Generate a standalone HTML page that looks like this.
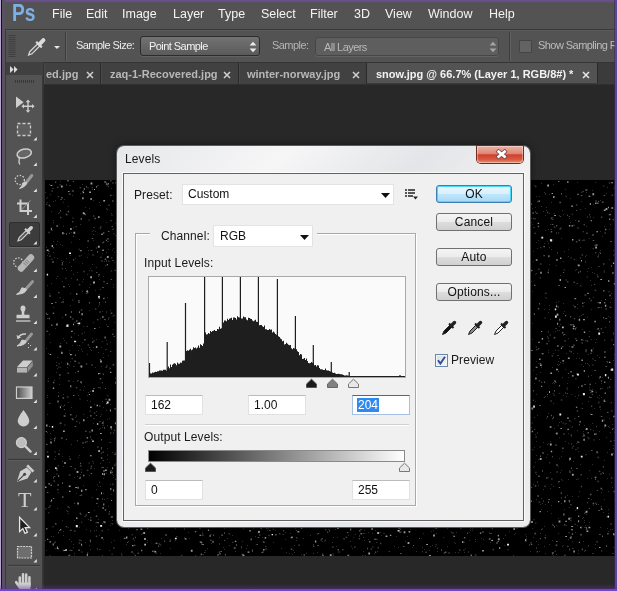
<!DOCTYPE html>
<html>
<head>
<meta charset="utf-8">
<title>Levels</title>
<style>
html,body{margin:0;padding:0;}
body{width:617px;height:591px;overflow:hidden;position:relative;background:#535353;font-family:"Liberation Sans",sans-serif;}
.abs{position:absolute;}
#app{will-change:transform;position:absolute;left:0;top:0;width:617px;height:591px;overflow:hidden;background:#535353;}
/* menu bar */
#menubar{left:0;top:0;width:617px;height:28px;background:#535353;}
#menubar span{position:absolute;top:7px;font-size:12.5px;line-height:14px;color:#f4f4f4;white-space:nowrap;}
#pslogo{position:absolute;left:12px;top:-1px;font-size:24px;font-weight:bold;color:#7fb0e2;transform:scaleX(0.8);transform-origin:0 0;}
/* options bar */
#optbar{left:2px;top:28px;width:615px;height:35px;background:#535353;border-top:1px solid #535353;border-bottom:1px solid #343434;box-sizing:border-box;overflow:hidden;box-shadow:inset 0 1px 0 #383838, inset 0 2px 0 #5c5c5c;}
.optlabel{position:absolute;font-size:11px;color:#ececec;white-space:nowrap;letter-spacing:-0.55px;}
.optsel{position:absolute;height:20px;box-sizing:border-box;border:1px solid #2c2c2c;border-radius:3px;background:linear-gradient(#727272,#5a5a5a);font-size:11px;color:#f2f2f2;line-height:18px;padding-left:8px;white-space:nowrap;letter-spacing:-0.55px;box-shadow:0 1px 0 #626262;}
/* tab bar */
#tabbar{left:44px;top:63px;width:573px;height:21px;background:#3b3b3b;border-bottom:1px solid #303030;box-sizing:content-box;}
.tab{position:absolute;top:0;height:21px;box-sizing:border-box;border-right:1px solid #2a2a2a;font-size:11px;font-weight:bold;color:#b8b8b8;line-height:23px;white-space:nowrap;background:#414141;box-shadow:inset 1px 0 0 #4a4a4a;}
.tab.active{background:#535353;color:#f2f2f2;height:20px;box-shadow:none;}
/* tool bar */
#toolbar{left:2px;top:62px;width:41px;height:529px;background:#535353;border-right:1px solid #383838;box-sizing:border-box;}
/* canvas */
#canvasbg{left:44px;top:85px;width:573px;height:506px;background:#282828;}
#photo{left:45px;top:180px;width:570px;height:376px;overflow:hidden;background:#000;}
/* dialog */
#dlg{left:117px;top:146px;width:413px;height:381px;border-radius:7px;background:linear-gradient(135deg,#e6e7e9 0%,#f6f6f7 22%,#e4e5e8 40%,#f1f1f2 55%,#e6e7e9 75%,#ededee 100%);box-shadow:0 0 0 1px #5a5a5a, 0 0 8px rgba(0,0,0,.6);}
#client{left:7px;top:28px;width:399px;height:346px;background:#f0f0f0;box-shadow:0 0 0 1px #626262, 0 0 0 2px rgba(255,255,255,.75);}
.lbl{position:absolute;font-size:12px;color:#1a1a1a;white-space:nowrap;line-height:14px;letter-spacing:0.1px;}
.btn{position:absolute;width:76px;height:18px;box-sizing:border-box;border:1px solid #707070;border-radius:3px;background:linear-gradient(#f4f4f4 0%,#ececec 48%,#dddddd 52%,#d0d0d0 100%);font-size:12px;color:#111;text-align:center;line-height:16px;letter-spacing:0.15px;}
.inp{position:absolute;width:58px;height:20px;box-sizing:border-box;border:1px solid #e2e2e2;border-top-color:#bcbcbc;background:#fff;font-size:12px;color:#111;line-height:19px;padding-left:5px;}
.btn.def{border-color:#3c7fb1;box-shadow:inset 0 0 0 1px #48d8fb;background:linear-gradient(#eaf6fd 0%,#d9f0fc 48%,#bee6fd 52%,#a7d9f5 100%);}
.sel{position:absolute;box-sizing:border-box;border:1px solid #e3e3e3;background:#fff;font-size:12px;color:#111;}
</style>
</head>
<body>
<div id="app">

<!-- MENU BAR -->
<div id="menubar" class="abs">
  <div id="pslogo">Ps</div>
  <span style="left:52px">File</span>
  <span style="left:86px">Edit</span>
  <span style="left:122px">Image</span>
  <span style="left:173px">Layer</span>
  <span style="left:218px">Type</span>
  <span style="left:261px">Select</span>
  <span style="left:310px">Filter</span>
  <span style="left:354px">3D</span>
  <span style="left:385px">View</span>
  <span style="left:428px">Window</span>
  <span style="left:489px">Help</span>
</div>

<!-- OPTIONS BAR -->
<div id="optbar" class="abs">
  <svg class="abs" style="left:0;top:0" width="70" height="34" viewBox="0 0 70 34">
    <path d="M6.5 6.5H13.5M6.5 8.6H13.5M6.5 10.7H13.5M6.5 12.8H13.5M6.5 14.9H13.5M6.5 17H13.5M6.5 19.1H13.5M6.5 21.2H13.5M6.5 23.3H13.5M6.5 25.4H13.5M6.5 27.5H13.5" stroke="#3e3e3e" stroke-width="1"/>
    <path d="M26.6 26 L27.8 22.6 L35.6 14.8 L37.8 17 L30 24.8 Z" fill="#5a5a5a" stroke="#dcdcdc" stroke-width="1.2"/>
    <path d="M34.2 12.8 L39.8 18.4" stroke="#dcdcdc" stroke-width="2.2"/>
    <path d="M37.8 14.8 L41.4 11.2" stroke="#dcdcdc" stroke-width="4" stroke-linecap="round"/>
    <path d="M52 17 h6 l-3 3z" fill="#e8e8e8"/>
    <path d="M63.5 3V32" stroke="#3e3e3e" stroke-width="1"/><path d="M64.5 3V32" stroke="#606060" stroke-width="1"/>
  </svg>
  <div class="optlabel" style="left:74px;top:10px">Sample Size:</div>
  <div class="optsel" style="left:138px;top:7px;width:120px">Point Sample</div>
  <svg class="abs" style="left:247px;top:12px" width="8" height="12" viewBox="0 0 8 12"><path d="M0.6 4.4 L4 0.8 L7.4 4.4Z M0.6 7.6 L4 11.2 L7.4 7.6Z" fill="#ececec"/></svg>
  <div class="optlabel" style="left:270px;top:10px;color:#b4b4b4">Sample:</div>
  <div class="optsel" style="left:313px;top:8px;width:184px;height:19px;color:#b8b8b8;background:#5e5e5e;border-color:#464646">All Layers</div>
  <svg class="abs" style="left:487px;top:12px" width="8" height="12" viewBox="0 0 8 12"><path d="M0.6 4.4 L4 0.8 L7.4 4.4Z M0.6 7.6 L4 11.2 L7.4 7.6Z" fill="#a4a4a4"/></svg>
  <div class="abs" style="left:507px;top:3px;width:1px;height:29px;background:#3e3e3e;box-shadow:1px 0 0 #606060"></div>
  <div class="abs" style="left:517px;top:11px;width:13px;height:13px;box-sizing:border-box;border:1px solid #444;background:#636363;border-radius:1px"></div>
  <div class="optlabel" style="left:536px;top:10px;color:#bcbcbc">Show Sampling Ring</div>
</div>

<!-- TOOLBAR -->
<div id="toolbar" class="abs"></div>
<!--TOOLS--><svg class="abs" style="left:0;top:0" width="50" height="591" viewBox="0 0 50 591">
<rect x="2" y="62" width="3" height="529" fill="#595062"/><rect x="5" y="62" width="1" height="529" fill="#3c3c3c"/>
<rect x="43" y="62" width="2" height="529" fill="#333"/>
<rect x="6" y="62" width="37" height="13" fill="#404040"/>
<path d="M10 66 l3.6 3.5 l-3.6 3.5z M14 66 l3.6 3.5 l-3.6 3.5z" fill="#dcdcdc"/>
<path d="M15 81.5 H35" stroke="#383838" stroke-width="3" stroke-dasharray="1 1"/>
<path d="M16 96.5 V108 L23.6 102.2 Z" fill="#cecece"/>
<path d="M28 101 V111.5 M22.8 106.2 H33.2" stroke="#cecece" stroke-width="1.4"/>
<path d="M28 99.6 l-2.3 2.6 h4.6z M28 112.8 l-2.3 -2.6 h4.6z M21.4 106.2 l2.6 -2.3 v4.6z M34.6 106.2 l-2.6 -2.3 v4.6z" fill="#cecece"/>
<rect x="17.5" y="123.5" width="13" height="12" fill="#5f5f5f" stroke="#cecece" stroke-width="1.3" stroke-dasharray="3 2"/>
<path d="M36.8 137.1 V140.5 H33.4 Z" fill="#e4e4e4"/>
<ellipse cx="24.2" cy="153.5" rx="7.3" ry="4.3" transform="rotate(-14 24.2 153.5)" fill="#666" stroke="#cecece" stroke-width="1.5"/>
<path d="M18.2 157 q1.8 1.5 1 3 q-0.8 2 0.6 4.5" stroke="#cecece" stroke-width="1.4" fill="none"/>
<path d="M36.8 162.6 V166 H33.4 Z" fill="#e4e4e4"/>
<circle cx="19.8" cy="180" r="4.6" fill="none" stroke="#cecece" stroke-width="1.3" stroke-dasharray="1.5 1.5"/>
<path d="M31.8 175.5 L25.5 183.5" stroke="#989898" stroke-width="3" stroke-linecap="round"/>
<path d="M26.5 182.2 q0 4.5 -7 6.3 q2.8 -2 3.6 -5.6 z" fill="#cecece" stroke="#cecece" stroke-width="1"/>
<path d="M36.8 188.6 V192 H33.4 Z" fill="#e4e4e4"/>
<path d="M20.5 199.5 V211 H32 M17 203.5 H28 V215" stroke="#cecece" stroke-width="2" fill="none"/>
<path d="M30.5 200.5 L21.5 210" stroke="#989898" stroke-width="1"/>
<path d="M36.8 214.6 V218 H33.4 Z" fill="#e4e4e4"/>
<rect x="9.5" y="222.5" width="30" height="24" rx="1.5" fill="#3c3c3c" stroke="#2e2e2e" stroke-width="1"/>
<path d="M9.5 247.6 H39.5" stroke="#6a6a6a" stroke-width="1"/>
<path d="M18 240.8 L19.2 237.6 L26.2 230.6 L28.3 232.7 L21.3 239.7 Z" fill="#555" stroke="#cecece" stroke-width="1.2"/>
<path d="M25 228.8 L30 233.8" stroke="#cecece" stroke-width="2"/>
<path d="M28.2 230.8 L31.2 227.8" stroke="#cecece" stroke-width="3.6" stroke-linecap="round"/>
<path d="M36.8 241.1 V244.5 H33.4 Z" fill="#e4e4e4"/>
<circle cx="18.3" cy="262.5" r="4.6" fill="none" stroke="#cecece" stroke-width="1.3" stroke-dasharray="1.5 1.5"/>
<path d="M31 257.5 L21 268.5" stroke="#b6b6b6" stroke-width="6.4" stroke-linecap="round"/>
<path d="M28 260.8 L24 265.2" stroke="#8a8a8a" stroke-width="4.4" stroke-dasharray="1 1"/>
<path d="M36.8 268.6 V272 H33.4 Z" fill="#e4e4e4"/>
<path d="M32.6 281.5 L25 290" stroke="#989898" stroke-width="2.8" stroke-linecap="round"/>
<path d="M26.3 289 q0.2 4.6 -9.8 5.4 q4 -1.6 5.4 -6.6 z" fill="#cecece" stroke="#cecece" stroke-width="1"/>
<path d="M36.8 294.6 V298 H33.4 Z" fill="#e4e4e4"/>
<path d="M20.5 308.5 q0 -3 2.5 -3 q2.5 0 2.5 3 q0 1.8 -1.2 3.2 v3 h5.2 v3.6 h-13 v-3.6 h5.2 v-3 q-1.2 -1.4 -1.2 -3.2z" fill="#cecece"/>
<path d="M16 321 H30.5" stroke="#cecece" stroke-width="1.3"/>
<path d="M36.8 320.6 V324 H33.4 Z" fill="#e4e4e4"/>
<path d="M31.6 334 L25 342" stroke="#989898" stroke-width="2.8" stroke-linecap="round"/>
<path d="M26 341 q0.2 4.2 -9 5 q3.6 -1.6 5 -6 z" fill="#cecece" stroke="#cecece" stroke-width="1"/>
<path d="M18 338 q2 -4.5 8 -4" stroke="#cecece" stroke-width="1.5" fill="none"/><path d="M16.5 335 l1 4.2 l3.6 -2z" fill="#cecece"/>
<path d="M28.5 343 v1 M30.5 345 v1 M28.5 347 v1" stroke="#cecece" stroke-width="1"/>
<path d="M36.8 347.1 V350.5 H33.4 Z" fill="#e4e4e4"/>
<path d="M23 360.5 H32.5 L27 367 H17 Z" fill="#cecece"/>
<path d="M17 367.6 H27 V372.6 H17 Z" fill="#b4b4b4"/>
<path d="M27.6 367.4 L32.8 361.2 V366 L27.6 372.4 Z" fill="#8e8e8e"/>
<path d="M36.8 373.1 V376.5 H33.4 Z" fill="#e4e4e4"/>
<defs><linearGradient id="tg" x1="0" x2="1" y1="0" y2="0"><stop offset="0" stop-color="#4a4a4a"/><stop offset="1" stop-color="#cfcfcf"/></linearGradient></defs>
<rect x="16.5" y="387" width="15.5" height="11.4" fill="url(#tg)" stroke="#cecece" stroke-width="1.2"/>
<path d="M36.8 399.6 V403 H33.4 Z" fill="#e4e4e4"/>
<path d="M23.5 410 q-5.8 7.6 -5.8 11 a5.8 5.4 0 0 0 11.6 0 q0 -3.4 -5.8 -11z" fill="#cecece"/>
<path d="M36.8 425.6 V429 H33.4 Z" fill="#e4e4e4"/>
<circle cx="21.4" cy="442.6" r="5" fill="#bdbdbd" stroke="#cecece" stroke-width="1.2"/>
<path d="M25.2 446.2 L30.6 451.6" stroke="#cecece" stroke-width="2.4" stroke-linecap="round"/>
<path d="M36.8 451.6 V455 H33.4 Z" fill="#e4e4e4"/>
<path d="M8 459.5 H40" stroke="#3a3a3a" stroke-width="1.2"/><path d="M8 460.6 H40" stroke="#5e5e5e" stroke-width="1"/>
<path d="M16.8 482 L20.2 471.2 L26.8 467.4 L31.4 472 L27.6 478.6 Z" fill="#cecece"/>
<path d="M17.4 481.4 L24.2 474.6" stroke="#444" stroke-width="1.2"/><circle cx="24.6" cy="474.2" r="1.5" fill="#444"/>
<path d="M27.2 465.4 L33.4 471.6" stroke="#cecece" stroke-width="2.6"/>
<path d="M36.8 479.1 V482.5 H33.4 Z" fill="#e4e4e4"/>
<text x="18" y="507" font-family="Liberation Serif,serif" font-size="20" fill="#cecece" textLength="13.5" lengthAdjust="spacingAndGlyphs">T</text>
<path d="M36.8 507.1 V510.5 H33.4 Z" fill="#e4e4e4"/>
<path d="M19.6 517.4 V531.6 L22.8 528.6 L25 533.4 L27.4 532.2 L25.2 527.6 H29.6 Z" fill="#1e1e1e" stroke="#e6e6e6" stroke-width="1.3" stroke-linejoin="miter"/>
<path d="M36.8 533.1 V536.5 H33.4 Z" fill="#e4e4e4"/>
<rect x="17.5" y="546.5" width="14" height="11.5" fill="#6e6e6e" stroke="#cecece" stroke-width="1.2" stroke-dasharray="2 0.8"/>
<path d="M36.8 559.1 V562.5 H33.4 Z" fill="#e4e4e4"/>
<path d="M8 565.5 H40" stroke="#3a3a3a" stroke-width="1.2"/><path d="M8 566.6 H40" stroke="#5e5e5e" stroke-width="1"/>
<path d="M19.8 577.6V586M23 574.2V586M26.2 574.6V586M29.4 577.2V586" stroke="#cecece" stroke-width="2.5" stroke-linecap="round"/>
<path d="M18.55 582.5H30.65V586q0 3 -1.4 5H20.6L18.55 587Z" fill="#cecece"/>
<path d="M19.6 587.4L16.2 582.2" stroke="#cecece" stroke-width="2.6" stroke-linecap="round"/>
<path d="M36.8 587.4 V590.8 H33.4 Z" fill="#e4e4e4"/>
</svg><!--/TOOLS-->

<!-- TABS -->
<div id="tabbar" class="abs">
  <div class="tab" style="left:0;width:57px;padding-left:2px">ed.jpg</div>
  <div class="tab" style="left:57px;width:138px;padding-left:9px">zaq-1-Recovered.jpg</div>
  <div class="tab" style="left:195px;width:128px;padding-left:8px">winter-norway.jpg</div>
  <div class="tab active" style="left:323px;width:231px;padding-left:9px">snow.jpg @ 66.7% (Layer 1, RGB/8#) *</div>
  <svg class="abs" style="left:42px;top:8px" width="8" height="8" viewBox="0 0 8 8"><path d="M1 1L7 7M7 1L1 7" stroke="#d0d0d0" stroke-width="1.5"/></svg><svg class="abs" style="left:179px;top:8px" width="8" height="8" viewBox="0 0 8 8"><path d="M1 1L7 7M7 1L1 7" stroke="#d0d0d0" stroke-width="1.5"/></svg><svg class="abs" style="left:308px;top:8px" width="8" height="8" viewBox="0 0 8 8"><path d="M1 1L7 7M7 1L1 7" stroke="#d0d0d0" stroke-width="1.5"/></svg><svg class="abs" style="left:538px;top:8px" width="8" height="8" viewBox="0 0 8 8"><path d="M1 1L7 7M7 1L1 7" stroke="#e8e8e8" stroke-width="1.5"/></svg>
</div>

<!-- CANVAS -->
<div id="canvasbg" class="abs"></div>
<div id="photo" class="abs"><!--STARS--><svg width="570" height="376" viewBox="0 0 570 376" style="position:absolute;left:0;top:0"><path fill="#2e2e2e" d="M509 33h1v1h-1zM89 360h1v1h-1zM306 366h1v1h-1zM26 86h1v1h-1zM45 88h1v1h-1zM18 119h1v1h-1zM521 173h1v1h-1zM512 150h1v1h-1zM569 192h1v1h-1zM537 256h1v1h-1zM497 159h1v1h-1zM567 244h1v1h-1zM516 323h1v1h-1zM384 370h1v1h-1zM491 93h1v1h-1zM33 277h1v1h-1zM530 352h1v1h-1zM502 331h1v1h-1zM563 246h1v1h-1zM378 353h1v1h-1zM516 318h1v1h-1zM512 79h1v1h-1zM427 348h1v1h-1zM493 305h1v1h-1zM497 323h1v1h-1zM493 364h1v1h-1zM102 362h1v1h-1zM543 88h1v1h-1zM61 160h1v1h-1zM546 195h1v1h-1zM44 107h1v1h-1zM272 354h1v1h-1zM512 184h1v1h-1zM541 75h1v1h-1zM508 173h1v1h-1zM485 68h1v1h-1zM502 264h1v1h-1zM6 356h1v1h-1zM69 72h1v1h-1zM557 197h1v1h-1zM57 73h1v1h-1zM42 237h1v1h-1zM173 374h1v1h-1zM490 27h1v1h-1zM490 221h1v1h-1zM184 365h1v1h-1zM555 229h1v1h-1zM496 329h1v1h-1zM268 364h1v1h-1zM16 122h1v1h-1zM512 175h1v1h-1zM539 371h1v1h-1zM570 321h1v1h-1zM13 312h1v1h-1zM515 292h1v1h-1zM55 236h1v1h-1zM518 123h1v1h-1zM66 362h1v1h-1zM469 354h1v1h-1zM207 369h1v1h-1zM514 242h1v1h-1zM72 212h1v1h-1zM63 326h1v1h-1zM36 169h1v1h-1zM569 319h1v1h-1zM62 268h1v1h-1zM513 121h1v1h-1zM62 318h1v1h-1zM17 281h1v1h-1zM48 20h1v1h-1zM65 162h1v1h-1zM4 113h1v1h-1zM491 16h1v1h-1zM66 8h1v1h-1zM474 346h1v1h-1zM184 365h1v1h-1zM42 174h1v1h-1zM367 367h1v1h-1zM518 215h1v1h-1zM48 243h1v1h-1zM207 345h1v1h-1zM30 237h1v1h-1zM339 353h1v1h-1zM540 183h1v1h-1zM504 14h1v1h-1zM30 181h1v1h-1zM48 60h1v1h-1zM47 84h1v1h-1zM56 269h1v1h-1zM12 328h1v1h-1zM25 75h1v1h-1zM24 327h1v1h-1zM484 255h1v1h-1zM541 12h1v1h-1zM547 10h1v1h-1zM562 298h1v1h-1zM71 119h1v1h-1zM96 354h1v1h-1zM491 367h1v1h-1zM55 109h1v1h-1zM493 60h1v1h-1zM535 284h1v1h-1zM26 52h1v1h-1zM554 218h1v1h-1zM546 105h1v1h-1zM533 271h1v1h-1zM511 148h1v1h-1zM24 359h1v1h-1zM62 279h1v1h-1zM29 340h1v1h-1zM550 368h1v1h-1zM8 127h1v1h-1zM430 359h1v1h-1zM35 44h1v1h-1zM510 265h1v1h-1zM67 344h1v1h-1zM498 31h1v1h-1zM12 96h1v1h-1zM9 77h1v1h-1zM33 155h1v1h-1zM45 169h1v1h-1zM190 360h1v1h-1zM534 362h1v1h-1zM570 180h1v1h-1zM493 279h1v1h-1zM314 355h1v1h-1zM9 200h1v1h-1zM245 353h1v1h-1zM523 197h1v1h-1zM555 20h1v1h-1zM438 359h1v1h-1zM61 2h1v1h-1zM174 357h1v1h-1zM555 51h1v1h-1zM540 76h1v1h-1zM550 364h1v1h-1zM550 162h1v1h-1zM546 87h1v1h-1zM48 50h1v1h-1zM18 286h1v1h-1zM499 12h1v1h-1zM53 194h1v1h-1zM485 299h1v1h-1zM71 322h1v1h-1zM0 360h1v1h-1zM76 373h1v1h-1zM219 362h1v1h-1zM483 248h1v1h-1zM563 351h1v1h-1zM491 214h1v1h-1zM544 290h1v1h-1zM38 99h1v1h-1zM139 348h1v1h-1zM513 126h1v1h-1zM32 323h1v1h-1zM510 253h1v1h-1zM489 5h1v1h-1zM207 346h1v1h-1zM142 344h1v1h-1zM68 253h1v1h-1zM513 286h1v1h-1zM4 154h1v1h-1zM500 358h1v1h-1zM568 268h1v1h-1zM60 169h1v1h-1zM52 304h1v1h-1zM552 149h1v1h-1zM58 298h1v1h-1zM35 294h1v1h-1zM391 353h1v1h-1zM334 345h1v1h-1zM516 312h1v1h-1zM24 173h1v1h-1zM20 233h1v1h-1zM564 294h1v1h-1zM520 189h1v1h-1zM57 247h1v1h-1zM465 345h1v1h-1zM533 373h1v1h-1zM51 87h1v1h-1zM523 76h1v1h-1zM491 361h1v1h-1zM537 149h1v1h-1zM44 130h1v1h-1zM27 165h1v1h-1zM503 132h1v1h-1zM11 98h1v1h-1zM537 368h1v1h-1zM15 64h1v1h-1zM47 317h1v1h-1zM505 139h1v1h-1zM69 285h1v1h-1zM241 372h1v1h-1zM519 344h1v1h-1zM390 366h1v1h-1zM499 75h1v1h-1zM19 19h1v1h-1zM526 256h1v1h-1zM485 173h1v1h-1zM15 187h1v1h-1zM567 307h1v1h-1zM536 135h1v1h-1zM492 68h1v1h-1zM190 371h1v1h-1zM33 170h1v1h-1zM500 117h1v1h-1zM540 345h1v1h-1zM21 330h1v1h-1zM65 40h1v1h-1zM22 187h1v1h-1zM532 124h1v1h-1zM58 96h1v1h-1zM498 320h1v1h-1zM53 306h1v1h-1zM228 362h1v1h-1zM537 60h1v1h-1zM525 42h1v1h-1zM26 98h1v1h-1zM54 249h1v1h-1zM318 371h1v1h-1zM50 187h1v1h-1zM559 280h1v1h-1zM542 137h1v1h-1zM26 62h1v1h-1zM61 230h1v1h-1zM287 362h1v1h-1zM495 324h1v1h-1zM68 15h1v1h-1zM65 130h1v1h-1zM366 345h1v1h-1zM23 333h1v1h-1zM42 67h1v1h-1zM41 349h1v1h-1zM49 288h1v1h-1zM485 54h1v1h-1zM73 246h1v1h-1zM44 28h1v1h-1zM36 139h1v1h-1zM487 159h1v1h-1zM550 2h1v1h-1zM83 348h1v1h-1zM37 83h1v1h-1zM21 90h1v1h-1zM39 34h1v1h-1zM473 344h1v1h-1zM530 216h1v1h-1zM491 181h1v1h-1zM425 350h1v1h-1zM546 319h1v1h-1zM502 216h1v1h-1zM536 12h1v1h-1zM5 253h1v1h-1zM546 129h1v1h-1zM83 361h1v1h-1zM319 350h1v1h-1zM307 368h1v1h-1zM365 349h1v1h-1zM517 30h1v1h-1zM534 178h1v1h-1zM531 147h1v1h-1zM72 198h1v1h-1zM556 203h1v1h-1zM28 201h1v1h-1zM481 358h1v1h-1zM506 325h1v1h-1zM64 238h1v1h-1zM68 297h1v1h-1zM503 233h1v1h-1zM55 248h1v1h-1zM535 67h1v1h-1zM61 72h1v1h-1zM318 353h1v1h-1zM23 26h1v1h-1zM538 361h1v1h-1zM503 63h1v1h-1zM90 375h1v1h-1zM565 122h1v1h-1zM436 348h1v1h-1zM548 168h1v1h-1zM566 113h1v1h-1zM54 241h1v1h-1zM445 347h1v1h-1zM486 42h1v1h-1zM265 355h1v1h-1zM520 135h1v1h-1zM23 347h1v1h-1zM10 257h1v1h-1zM508 306h1v1h-1zM568 367h1v1h-1zM532 345h1v1h-1zM318 357h1v1h-1zM502 156h1v1h-1zM24 276h1v1h-1zM70 43h1v1h-1zM292 357h1v1h-1zM67 49h1v1h-1zM525 18h1v1h-1zM330 350h1v1h-1zM202 365h1v1h-1zM67 294h1v1h-1zM489 267h1v1h-1zM49 330h1v1h-1zM516 58h1v1h-1zM483 328h1v1h-1zM546 210h1v1h-1zM509 203h1v1h-1zM17 340h1v1h-1zM503 170h1v1h-1zM65 224h1v1h-1zM56 167h1v1h-1zM527 316h1v1h-1zM569 252h1v1h-1zM249 372h1v1h-1zM22 182h1v1h-1zM331 362h1v1h-1zM490 282h1v1h-1zM201 368h1v1h-1zM16 182h1v1h-1zM44 295h1v1h-1zM541 347h1v1h-1zM566 118h1v1h-1zM5 26h1v1h-1zM69 360h1v1h-1zM63 69h1v1h-1zM545 100h1v1h-1zM42 215h1v1h-1zM532 250h1v1h-1zM536 184h1v1h-1zM323 352h1v1h-1zM360 361h1v1h-1zM305 361h1v1h-1zM22 144h1v1h-1zM36 203h1v1h-1zM256 374h1v1h-1zM32 296h1v1h-1zM26 264h1v1h-1zM556 217h1v1h-1zM250 348h1v1h-1zM501 30h1v1h-1zM42 220h1v1h-1zM18 214h1v1h-1zM63 175h1v1h-1zM508 223h1v1h-1zM56 186h1v1h-1zM40 336h1v1h-1zM19 160h1v1h-1zM38 267h1v1h-1zM559 90h1v1h-1zM513 170h1v1h-1zM558 332h1v1h-1zM504 33h1v1h-1zM102 360h1v1h-1zM116 358h1v1h-1zM531 178h1v1h-1zM545 233h1v1h-1zM516 299h1v1h-1zM557 56h1v1h-1zM556 201h1v1h-1zM557 329h1v1h-1zM566 302h1v1h-1zM459 365h1v1h-1zM494 371h1v1h-1zM547 284h1v1h-1zM15 1h1v1h-1zM158 374h1v1h-1zM235 346h1v1h-1zM238 344h1v1h-1zM11 182h1v1h-1zM25 113h1v1h-1zM251 360h1v1h-1zM64 370h1v1h-1zM178 367h1v1h-1zM488 71h1v1h-1zM569 185h1v1h-1zM48 54h1v1h-1zM527 368h1v1h-1zM387 365h1v1h-1zM244 373h1v1h-1zM32 92h1v1h-1zM12 177h1v1h-1zM470 353h1v1h-1zM424 352h1v1h-1zM61 81h1v1h-1zM523 253h1v1h-1zM51 309h1v1h-1zM528 125h1v1h-1zM524 38h1v1h-1zM2 75h1v1h-1zM539 333h1v1h-1zM517 366h1v1h-1zM210 356h1v1h-1zM491 294h1v1h-1zM54 22h1v1h-1zM530 330h1v1h-1zM567 349h1v1h-1zM482 326h1v1h-1zM53 326h1v1h-1zM54 124h1v1h-1zM559 46h1v1h-1zM530 40h1v1h-1zM517 300h1v1h-1zM492 301h1v1h-1zM53 96h1v1h-1zM12 78h1v1h-1zM544 58h1v1h-1zM55 138h1v1h-1zM51 159h1v1h-1zM561 257h1v1h-1zM45 369h1v1h-1zM10 148h1v1h-1zM489 203h1v1h-1zM514 278h1v1h-1zM59 319h1v1h-1zM569 14h1v1h-1zM538 186h1v1h-1zM317 376h1v1h-1zM496 58h1v1h-1zM460 355h1v1h-1zM179 369h1v1h-1zM499 366h1v1h-1zM507 203h1v1h-1zM63 139h1v1h-1zM240 352h1v1h-1zM25 181h1v1h-1zM513 127h1v1h-1zM532 128h1v1h-1zM14 198h1v1h-1zM537 338h1v1h-1zM288 357h1v1h-1zM34 347h1v1h-1zM570 317h1v1h-1zM160 346h1v1h-1zM51 231h1v1h-1zM73 24h1v1h-1zM247 374h1v1h-1zM504 84h1v1h-1zM3 73h1v1h-1zM420 368h1v1h-1zM42 94h1v1h-1zM533 316h1v1h-1zM35 13h1v1h-1zM483 24h1v1h-1zM524 166h1v1h-1zM55 283h1v1h-1zM505 292h1v1h-1zM4 4h1v1h-1zM483 92h1v1h-1zM58 313h1v1h-1zM503 49h1v1h-1zM487 111h1v1h-1zM510 170h1v1h-1zM48 283h1v1h-1zM23 193h1v1h-1zM43 339h1v1h-1zM45 104h1v1h-1zM521 216h1v1h-1zM217 357h1v1h-1zM564 49h1v1h-1zM115 373h1v1h-1zM484 156h1v1h-1zM65 345h1v1h-1zM39 206h1v1h-1zM509 200h1v1h-1zM36 360h1v1h-1zM356 351h1v1h-1zM60 122h1v1h-1zM526 214h1v1h-1zM527 290h1v1h-1zM10 343h1v1h-1zM413 372h1v1h-1zM500 50h1v1h-1zM496 26h1v1h-1zM531 89h1v1h-1zM554 150h1v1h-1zM112 344h1v1h-1zM491 275h1v1h-1zM33 145h1v1h-1zM345 355h1v1h-1zM402 366h1v1h-1zM519 329h1v1h-1zM427 350h1v1h-1zM62 239h1v1h-1zM49 47h1v1h-1zM35 283h1v1h-1zM332 371h1v1h-1zM516 276h1v1h-1zM488 190h1v1h-1zM499 63h1v1h-1zM66 249h1v1h-1zM488 304h1v1h-1zM66 33h1v1h-1zM544 217h1v1h-1zM166 363h1v1h-1zM68 149h1v1h-1zM565 252h1v1h-1zM491 261h1v1h-1zM48 47h1v1h-1zM539 340h1v1h-1zM25 14h1v1h-1zM488 81h1v1h-1zM549 93h1v1h-1zM524 240h1v1h-1zM44 90h1v1h-1zM386 351h1v1h-1zM71 5h1v1h-1zM29 186h1v1h-1zM3 173h1v1h-1zM5 162h1v1h-1zM4 289h1v1h-1zM564 247h1v1h-1zM546 298h1v1h-1zM565 349h1v1h-1zM29 153h1v1h-1zM27 15h1v1h-1zM402 348h1v1h-1zM413 372h1v1h-1zM156 364h1v1h-1zM26 90h1v1h-1zM564 79h1v1h-1zM514 35h1v1h-1zM12 61h1v1h-1zM40 27h1v1h-1zM518 365h1v1h-1zM520 9h1v1h-1zM58 359h1v1h-1zM557 292h1v1h-1zM73 289h1v1h-1zM314 350h1v1h-1zM17 137h1v1h-1zM8 42h1v1h-1zM61 80h1v1h-1zM519 71h1v1h-1zM530 90h1v1h-1zM562 182h1v1h-1zM74 254h1v1h-1zM558 287h1v1h-1zM500 373h1v1h-1zM5 321h1v1h-1zM513 175h1v1h-1zM18 226h1v1h-1zM534 136h1v1h-1zM39 152h1v1h-1zM53 339h1v1h-1zM125 368h1v1h-1zM488 357h1v1h-1zM547 373h1v1h-1zM245 353h1v1h-1zM522 315h1v1h-1zM554 215h1v1h-1zM63 349h1v1h-1zM487 44h1v1h-1zM17 52h1v1h-1zM539 347h1v1h-1zM409 362h1v1h-1zM61 144h1v1h-1zM507 360h1v1h-1zM65 304h1v1h-1zM28 186h1v1h-1zM511 345h1v1h-1zM484 364h1v1h-1zM17 18h1v1h-1zM540 28h1v1h-1zM377 367h1v1h-1zM44 365h1v1h-1zM489 286h1v1h-1zM58 173h1v1h-1zM28 94h1v1h-1zM503 263h1v1h-1zM548 250h1v1h-1zM419 372h1v1h-1zM51 346h1v1h-1zM563 329h1v1h-1zM519 131h1v1h-1zM336 355h1v1h-1zM246 345h1v1h-1zM18 351h1v1h-1zM528 173h1v1h-1zM319 360h1v1h-1zM223 348h1v1h-1zM70 55h1v1h-1zM57 221h1v1h-1zM518 133h1v1h-1zM503 172h1v1h-1zM549 228h1v1h-1zM17 276h1v1h-1zM523 299h1v1h-1zM502 274h1v1h-1zM555 347h1v1h-1zM17 65h1v1h-1zM19 53h1v1h-1zM18 158h1v1h-1zM506 22h1v1h-1zM314 356h1v1h-1zM484 365h1v1h-1zM560 138h1v1h-1zM32 165h1v1h-1zM508 375h1v1h-1zM542 183h1v1h-1zM20 88h1v1h-1zM436 358h1v1h-1zM11 144h1v1h-1zM425 348h1v1h-1zM5 14h1v1h-1zM73 237h1v1h-1zM569 29h1v1h-1zM45 211h1v1h-1zM562 348h1v1h-1zM73 262h1v1h-1zM290 349h1v1h-1zM501 118h1v1h-1zM97 353h1v1h-1zM508 202h1v1h-1zM540 160h1v1h-1zM50 51h1v1h-1zM179 348h1v1h-1zM531 299h1v1h-1zM538 253h1v1h-1zM38 210h1v1h-1zM17 101h1v1h-1zM308 357h1v1h-1zM24 106h1v1h-1zM500 324h1v1h-1zM552 217h1v1h-1zM62 117h1v1h-1zM537 223h1v1h-1zM566 31h1v1h-1zM249 365h1v1h-1zM458 358h1v1h-1zM268 373h1v1h-1zM53 172h1v1h-1zM8 72h1v1h-1zM59 81h1v1h-1zM30 192h1v1h-1zM513 245h1v1h-1zM499 346h1v1h-1zM568 265h1v1h-1zM33 215h1v1h-1zM513 338h1v1h-1zM562 272h1v1h-1zM8 250h1v1h-1zM480 354h1v1h-1zM49 350h1v1h-1zM523 69h1v1h-1zM11 64h1v1h-1zM500 355h1v1h-1zM504 67h1v1h-1zM66 248h1v1h-1zM496 3h1v1h-1zM57 343h1v1h-1zM544 151h1v1h-1zM521 243h1v1h-1zM546 159h1v1h-1zM492 302h1v1h-1zM277 361h1v1h-1zM554 259h1v1h-1zM556 120h1v1h-1zM10 122h1v1h-1zM222 350h1v1h-1zM541 46h1v1h-1zM539 122h1v1h-1zM485 61h1v1h-1zM564 269h1v1h-1zM55 241h1v1h-1zM513 185h1v1h-1zM16 80h1v1h-1zM8 356h1v1h-1zM37 162h1v1h-1zM536 21h1v1h-1zM268 365h1v1h-1zM518 183h1v1h-1zM58 241h1v1h-1zM211 347h1v1h-1zM12 290h1v1h-1zM68 154h1v1h-1zM507 374h1v1h-1zM541 334h1v1h-1zM93 373h1v1h-1zM524 290h1v1h-1zM500 355h1v1h-1zM69 284h1v1h-1zM539 245h1v1h-1zM57 131h1v1h-1zM552 175h1v1h-1zM568 70h1v1h-1zM488 287h1v1h-1zM14 204h1v1h-1zM556 312h1v1h-1zM10 276h1v1h-1zM28 364h1v1h-1zM40 362h1v1h-1zM499 357h1v1h-1zM493 183h1v1h-1zM516 241h1v1h-1zM544 216h1v1h-1zM518 81h1v1h-1zM196 366h1v1h-1zM261 373h1v1h-1zM430 361h1v1h-1zM553 122h1v1h-1zM88 373h1v1h-1zM317 375h1v1h-1zM514 146h1v1h-1zM208 348h1v1h-1zM557 309h1v1h-1zM568 8h1v1h-1zM16 225h1v1h-1zM46 170h1v1h-1zM1 370h1v1h-1zM538 251h1v1h-1zM538 160h1v1h-1zM47 9h1v1h-1zM31 313h1v1h-1zM42 77h1v1h-1zM563 311h1v1h-1zM492 235h1v1h-1zM501 277h1v1h-1zM514 184h1v1h-1zM187 355h1v1h-1zM388 350h1v1h-1zM22 146h1v1h-1zM25 5h1v1h-1zM490 94h1v1h-1zM514 257h1v1h-1zM2 22h1v1h-1zM485 371h1v1h-1zM543 174h1v1h-1zM62 245h1v1h-1zM74 350h1v1h-1zM55 25h1v1h-1zM524 327h1v1h-1zM51 350h1v1h-1zM424 360h1v1h-1zM38 234h1v1h-1zM516 168h1v1h-1zM502 61h1v1h-1zM483 94h1v1h-1zM539 342h1v1h-1zM563 136h1v1h-1zM563 333h1v1h-1zM565 137h1v1h-1zM150 375h1v1h-1zM497 348h1v1h-1zM521 345h1v1h-1zM61 28h1v1h-1zM43 70h1v1h-1zM564 238h1v1h-1zM54 147h1v1h-1zM544 207h1v1h-1zM247 356h1v1h-1zM11 192h1v1h-1zM38 146h1v1h-1zM566 168h1v1h-1zM10 20h1v1h-1zM15 163h1v1h-1zM283 349h1v1h-1zM554 127h1v1h-1zM66 343h1v1h-1zM24 82h1v1h-1zM23 222h1v1h-1zM68 107h1v1h-1zM505 308h1v1h-1zM535 29h1v1h-1zM0 12h1v1h-1zM6 103h1v1h-1zM548 37h1v1h-1zM505 261h1v1h-1zM13 212h1v1h-1zM36 289h1v1h-1zM543 184h1v1h-1zM484 18h1v1h-1zM504 125h1v1h-1zM491 62h1v1h-1zM47 158h1v1h-1zM392 371h1v1h-1zM542 91h1v1h-1zM55 306h1v1h-1zM18 46h1v1h-1zM144 358h1v1h-1zM24 185h1v1h-1zM561 13h1v1h-1zM516 290h1v1h-1zM139 349h1v1h-1zM14 32h1v1h-1zM66 15h1v1h-1zM272 372h1v1h-1zM534 311h1v1h-1zM23 104h1v1h-1zM371 371h1v1h-1zM130 348h1v1h-1zM554 72h1v1h-1zM67 272h1v1h-1zM506 304h1v1h-1zM532 173h1v1h-1zM38 305h1v1h-1zM68 68h1v1h-1zM508 213h1v1h-1zM71 93h1v1h-1zM508 345h1v1h-1zM2 252h1v1h-1zM491 319h1v1h-1zM485 282h1v1h-1zM499 129h1v1h-1zM518 34h1v1h-1zM568 180h1v1h-1zM510 148h1v1h-1zM24 370h1v1h-1zM143 352h1v1h-1zM489 47h1v1h-1zM515 144h1v1h-1zM515 95h1v1h-1zM547 92h1v1h-1zM559 319h1v1h-1zM288 375h1v1h-1zM7 50h1v1h-1zM565 61h1v1h-1zM125 344h1v1h-1zM511 85h1v1h-1zM236 368h1v1h-1zM486 38h1v1h-1zM1 67h1v1h-1zM57 375h1v1h-1zM258 358h1v1h-1zM45 221h1v1h-1zM61 169h1v1h-1zM335 352h1v1h-1zM551 159h1v1h-1zM517 271h1v1h-1zM25 125h1v1h-1zM1 18h1v1h-1zM513 353h1v1h-1zM487 348h1v1h-1zM498 321h1v1h-1zM24 170h1v1h-1zM553 324h1v1h-1zM568 273h1v1h-1zM13 369h1v1h-1zM54 99h1v1h-1zM506 69h1v1h-1zM230 350h1v1h-1zM500 35h1v1h-1zM54 355h1v1h-1zM523 263h1v1h-1zM488 47h1v1h-1zM557 152h1v1h-1zM68 252h1v1h-1zM8 40h1v1h-1zM37 171h1v1h-1zM491 194h1v1h-1zM130 360h1v1h-1zM43 212h1v1h-1zM67 343h1v1h-1zM514 178h1v1h-1zM62 287h1v1h-1zM323 359h1v1h-1zM566 127h1v1h-1zM410 372h1v1h-1zM30 78h1v1h-1zM37 101h1v1h-1zM498 309h1v1h-1zM560 147h1v1h-1zM494 16h1v1h-1zM48 142h1v1h-1zM548 373h1v1h-1zM508 4h1v1h-1zM468 375h1v1h-1zM61 293h1v1h-1zM162 368h1v1h-1zM2 234h1v1h-1zM73 293h1v1h-1zM3 198h1v1h-1zM219 358h1v1h-1zM12 188h1v1h-1zM353 367h1v1h-1zM81 364h1v1h-1zM319 353h1v1h-1zM139 357h1v1h-1zM514 213h1v1h-1zM359 347h1v1h-1zM197 361h1v1h-1zM58 227h1v1h-1zM64 282h1v1h-1zM69 82h1v1h-1zM548 325h1v1h-1zM291 366h1v1h-1zM157 374h1v1h-1zM58 177h1v1h-1zM8 61h1v1h-1zM568 154h1v1h-1zM495 358h1v1h-1zM520 261h1v1h-1zM510 151h1v1h-1zM445 362h1v1h-1zM486 101h1v1h-1zM45 256h1v1h-1zM50 110h1v1h-1zM26 361h1v1h-1zM542 298h1v1h-1zM351 356h1v1h-1zM34 275h1v1h-1zM532 2h1v1h-1zM501 27h1v1h-1zM565 44h1v1h-1zM36 75h1v1h-1zM51 92h1v1h-1zM513 181h1v1h-1zM547 243h1v1h-1zM544 342h1v1h-1zM57 161h1v1h-1zM487 28h1v1h-1zM511 122h1v1h-1zM183 353h1v1h-1zM2 215h1v1h-1zM385 366h1v1h-1zM10 368h1v1h-1zM495 192h1v1h-1zM329 373h1v1h-1zM527 361h1v1h-1zM528 281h1v1h-1zM379 369h1v1h-1zM482 98h1v1h-1zM303 355h1v1h-1zM182 358h1v1h-1zM501 238h1v1h-1zM18 22h1v1h-1zM481 356h1v1h-1zM2 17h1v1h-1zM68 295h1v1h-1zM24 5h1v1h-1zM544 185h1v1h-1zM490 254h1v1h-1zM558 152h1v1h-1zM71 95h1v1h-1zM310 354h1v1h-1zM489 237h1v1h-1zM48 167h1v1h-1zM49 224h1v1h-1zM67 340h1v1h-1zM26 227h1v1h-1zM411 352h1v1h-1zM532 218h1v1h-1zM248 370h1v1h-1zM42 376h1v1h-1zM511 374h1v1h-1zM498 262h1v1h-1zM60 85h1v1h-1zM28 47h1v1h-1zM45 257h1v1h-1zM72 194h1v1h-1zM29 297h1v1h-1zM8 297h1v1h-1zM198 348h1v1h-1zM38 10h1v1h-1zM160 370h1v1h-1zM504 129h1v1h-1zM454 368h1v1h-1zM18 355h1v1h-1zM496 318h1v1h-1zM533 370h1v1h-1zM514 150h1v1h-1zM512 133h1v1h-1zM516 317h1v1h-1zM523 359h1v1h-1zM67 70h1v1h-1zM6 31h1v1h-1zM165 345h1v1h-1zM543 221h1v1h-1zM554 251h1v1h-1zM1 168h1v1h-1zM13 33h1v1h-1zM557 208h1v1h-1zM538 337h1v1h-1zM338 353h1v1h-1zM2 217h1v1h-1zM496 187h1v1h-1zM327 353h1v1h-1zM506 333h1v1h-1zM398 357h1v1h-1zM559 247h1v1h-1zM500 216h1v1h-1zM66 314h1v1h-1zM528 368h1v1h-1zM39 336h1v1h-1zM503 297h1v1h-1zM523 158h1v1h-1zM491 368h1v1h-1zM522 203h1v1h-1zM507 37h1v1h-1zM562 7h1v1h-1zM14 270h1v1h-1zM531 263h1v1h-1zM47 51h1v1h-1zM34 59h1v1h-1zM463 346h1v1h-1zM37 4h1v1h-1zM68 104h1v1h-1zM18 81h1v1h-1zM349 366h1v1h-1zM331 362h1v1h-1zM483 59h1v1h-1zM547 209h1v1h-1zM505 44h1v1h-1zM72 341h1v1h-1zM517 197h1v1h-1zM2 138h1v1h-1zM61 42h1v1h-1zM29 373h1v1h-1zM513 302h1v1h-1zM548 117h1v1h-1zM55 193h1v1h-1zM240 359h1v1h-1zM21 78h1v1h-1zM534 262h1v1h-1zM72 329h1v1h-1zM53 126h1v1h-1zM332 359h1v1h-1zM538 11h1v1h-1zM550 203h1v1h-1zM495 353h1v1h-1zM8 21h1v1h-1zM504 364h1v1h-1zM56 234h1v1h-1zM555 70h1v1h-1zM33 200h1v1h-1zM362 356h1v1h-1zM548 24h1v1h-1zM522 209h1v1h-1zM507 187h1v1h-1zM2 105h1v1h-1zM464 351h1v1h-1zM483 73h1v1h-1zM69 142h1v1h-1zM410 363h1v1h-1zM509 248h1v1h-1zM554 177h1v1h-1zM28 367h1v1h-1zM487 143h1v1h-1z"/><path fill="#5a5a5a" d="M17.0 82.2h1v1.5h-1zM3.7 303.0h1v1h-1zM533.9 243.7h1v1.5h-1zM216.3 372.1h1.5v1h-1.5zM26.9 41.2h1.5v1h-1.5zM504.3 282.3h1v1h-1zM1.8 271.5h1.5v1h-1.5zM73.2 178.7h1v1.5h-1zM533.2 214.7h1v1h-1zM271.8 345.7h1v1.5h-1zM45.7 69.9h1.5v1h-1.5zM230.2 354.0h1.5v1.5h-1.5zM22.7 30.8h1.5v1.5h-1.5zM57.0 202.2h1v1h-1zM65.8 40.2h1v1h-1zM2.0 289.9h1v1h-1zM102.2 347.6h1v1.5h-1zM61.8 163.4h1v1h-1zM1.0 348.0h1.5v1.5h-1.5zM513.0 190.7h1v1h-1zM452.4 360.9h1.5v1h-1.5zM26.3 370.0h1v1h-1zM380.5 371.4h1v1.5h-1zM491.1 169.2h1.5v1h-1.5zM36.6 153.3h1v1h-1zM515.8 219.6h1.5v1h-1.5zM524.1 368.8h1v1.5h-1zM46.7 7.3h1v1h-1zM14.6 117.3h1v1h-1zM536.6 74.6h1.5v1h-1.5zM23.4 200.3h1v1.5h-1zM524.2 291.3h1.5v1.5h-1.5zM502.5 91.7h1.5v1.5h-1.5zM555.3 208.1h1v1.5h-1zM564.3 114.8h1.5v1.5h-1.5zM56.6 286.8h1v1.5h-1zM46.3 90.2h1v1h-1zM34.0 298.0h1.5v1h-1.5zM507.0 276.2h1v1h-1zM293.3 371.5h1.5v1h-1.5zM528.8 164.7h1v1h-1zM565.6 343.3h1v1.5h-1zM558.7 91.6h1v1h-1zM493.2 167.9h1v1.5h-1zM217.3 371.6h1.5v1h-1.5zM557.7 285.9h1v1h-1zM548.4 259.6h1v1h-1zM4.6 325.3h1v1.5h-1zM499.6 137.6h1v1h-1zM550.9 323.4h1v1.5h-1zM7.9 201.8h1.5v1.5h-1.5zM539.4 114.4h1v1h-1zM505.7 51.0h1.5v1.5h-1.5zM535.3 105.2h1v1h-1zM71.9 234.7h1.5v1h-1.5zM543.5 258.2h1v1h-1zM53.1 36.3h1v1.5h-1zM34.2 359.7h1.5v1h-1.5zM555.5 307.7h1.5v1.5h-1.5zM3.5 327.1h1v1h-1zM525.1 324.2h1.5v1h-1.5zM255.9 347.5h1.5v1.5h-1.5zM330.8 358.8h1v1h-1zM403.3 372.6h1.5v1h-1.5zM485.4 362.6h1v1h-1zM539.9 370.1h1v1h-1zM532.5 267.5h1v1h-1zM69.5 89.7h1.5v1h-1.5zM35.8 314.6h1.5v1h-1.5zM0.9 132.7h1v1.5h-1zM205.5 358.5h1.5v1.5h-1.5zM38.5 90.7h1v1.5h-1zM36.0 291.8h1v1h-1zM220.4 366.1h1v1h-1zM72.0 88.7h1v1h-1zM67.1 291.4h1v1.5h-1zM162.8 344.6h1v1h-1zM73.2 311.7h1.5v1h-1.5zM482.2 94.2h1.5v1h-1.5zM71.3 113.9h1.5v1.5h-1.5zM16.2 17.1h1.5v1h-1.5zM165.1 359.7h1.5v1h-1.5zM34.2 165.3h1v1h-1zM159.4 371.9h1v1h-1zM555.8 148.1h1v1.5h-1zM92.6 372.5h1v1.5h-1zM558.5 219.5h1.5v1.5h-1.5zM29.3 180.6h1.5v1.5h-1.5zM483.6 273.5h1.5v1h-1.5zM319.7 375.3h1v1h-1zM545.3 172.8h1.5v1h-1.5zM536.6 369.3h1.5v1h-1.5zM526.7 246.6h1v1h-1zM529.2 126.0h1.5v1.5h-1.5zM54.4 369.1h1v1h-1zM66.3 77.2h1v1.5h-1zM509.7 370.8h1v1h-1zM13.0 112.2h1.5v1h-1.5zM157.1 352.5h1v1h-1zM19.1 224.8h1v1h-1zM492.3 21.2h1v1h-1zM554.2 354.0h1.5v1h-1.5zM29.4 141.8h1v1h-1zM521.6 207.6h1v1h-1zM3.6 51.7h1v1.5h-1zM9.5 271.5h1v1h-1zM45.0 360.7h1v1.5h-1zM154.5 347.5h1v1.5h-1zM511.0 124.7h1v1.5h-1zM155.8 373.2h1v1.5h-1zM536.5 162.4h1.5v1h-1.5zM48.8 232.6h1.5v1h-1.5zM46.8 58.0h1.5v1h-1.5zM313.6 358.3h1.5v1h-1.5zM42.2 372.5h1v1.5h-1zM288.8 346.1h1.5v1h-1.5zM510.4 201.9h1v1h-1zM25.2 369.8h1v1h-1zM484.0 243.6h1v1.5h-1zM367.8 376.0h1v1h-1zM549.4 190.0h1.5v1h-1.5zM558.0 110.0h1.5v1.5h-1.5zM33.8 104.3h1.5v1h-1.5zM1.4 291.1h1.5v1h-1.5zM551.8 310.1h1v1h-1zM27.6 37.4h1v1h-1zM531.7 103.0h1v1h-1zM49.4 37.8h1.5v1.5h-1.5zM48.0 208.1h1.5v1h-1.5zM64.3 187.8h1.5v1h-1.5zM34.5 296.8h1.5v1.5h-1.5zM37.7 262.7h1v1h-1zM555.8 236.0h1.5v1h-1.5zM4.5 75.5h1v1.5h-1zM525.1 337.4h1.5v1h-1.5zM537.8 51.2h1v1h-1zM68.8 134.7h1v1h-1zM568.4 74.4h1v1h-1zM565.2 199.1h1v1h-1zM89.8 356.7h1v1.5h-1zM1.0 264.0h1.5v1h-1.5zM6.5 78.8h1v1h-1zM561.6 335.9h1v1.5h-1zM35.1 282.8h1v1.5h-1zM553.3 221.7h1v1.5h-1zM45.0 339.4h1.5v1.5h-1.5zM513.3 301.0h1.5v1h-1.5zM535.6 347.8h1v1h-1zM547.5 178.4h1v1h-1zM11.4 293.4h1v1h-1zM519.6 243.4h1v1h-1zM174.1 363.6h1v1h-1zM36.4 371.6h1v1h-1zM374.0 358.0h1v1h-1zM516.9 152.1h1.5v1.5h-1.5zM67.1 20.2h1.5v1.5h-1.5zM40.6 334.4h1.5v1h-1.5zM2.7 200.7h1v1h-1zM10.2 1.6h1v1.5h-1zM76.3 374.5h1v1h-1zM567.0 248.9h1v1h-1zM563.5 111.3h1v1h-1zM322.1 367.7h1v1.5h-1zM451.3 362.2h1.5v1.5h-1.5zM549.7 109.8h1.5v1h-1.5zM530.2 147.7h1v1.5h-1zM26.5 238.1h1v1h-1zM59.0 247.2h1v1.5h-1zM502.4 157.4h1.5v1h-1.5zM405.8 351.8h1v1h-1zM65.8 132.4h1.5v1.5h-1.5zM550.5 20.2h1v1.5h-1zM482.2 2.1h1v1h-1zM29.0 350.6h1.5v1h-1.5zM14.1 194.3h1.5v1.5h-1.5zM512.0 72.4h1v1h-1zM553.8 290.8h1.5v1h-1.5zM67.4 2.2h1v1.5h-1zM547.3 54.2h1.5v1.5h-1.5zM212.7 357.0h1.5v1h-1.5zM70.2 1.9h1.5v1.5h-1.5zM539.8 114.6h1.5v1h-1.5zM65.3 252.3h1v1.5h-1zM56.0 272.8h1v1h-1zM569.3 177.5h1v1h-1zM558.9 121.9h1.5v1.5h-1.5zM494.6 183.1h1.5v1h-1.5zM12.8 16.2h1v1h-1zM546.2 225.4h1v1.5h-1zM539.9 81.4h1v1h-1zM54.9 178.9h1v1.5h-1zM511.3 291.4h1.5v1h-1.5zM4.1 246.1h1v1h-1zM89.7 374.8h1v1.5h-1zM549.1 104.0h1v1h-1zM499.4 305.7h1.5v1h-1.5zM550.7 211.8h1v1h-1zM44.7 359.4h1v1.5h-1zM490.4 291.7h1v1.5h-1zM325.7 368.2h1v1.5h-1zM44.7 230.7h1v1h-1zM445.2 353.0h1.5v1h-1.5zM13.2 273.6h1.5v1.5h-1.5zM567.7 39.1h1v1.5h-1zM253.6 364.5h1v1.5h-1zM525.6 356.1h1v1h-1zM45.1 235.1h1.5v1.5h-1.5zM58.3 101.2h1.5v1h-1.5zM568.8 174.3h1v1h-1zM297.0 369.3h1.5v1h-1.5zM533.6 59.6h1.5v1.5h-1.5zM23.9 294.6h1.5v1h-1.5zM34.1 242.4h1v1h-1zM7.5 346.3h1v1h-1zM414.0 369.6h1.5v1h-1.5zM12.4 309.0h1v1.5h-1zM44.0 122.1h1v1.5h-1zM529.3 238.3h1v1h-1zM526.8 33.7h1v1h-1zM173.7 371.4h1v1.5h-1zM355.1 373.1h1.5v1h-1.5zM34.3 75.5h1v1h-1zM220.3 368.4h1.5v1h-1.5zM515.2 182.2h1v1h-1zM113.4 363.5h1.5v1h-1.5zM217.9 361.2h1.5v1.5h-1.5zM562.0 232.0h1.5v1h-1.5zM14.9 29.9h1v1.5h-1zM482.3 176.3h1v1h-1zM423.1 371.6h1v1h-1zM24.2 374.4h1v1.5h-1zM22.4 145.7h1v1h-1zM443.9 352.6h1v1h-1zM520.0 212.6h1v1h-1zM495.2 67.3h1v1h-1zM503.1 89.4h1v1h-1zM27.9 55.7h1v1h-1zM62.3 274.4h1v1h-1zM355.2 348.6h1v1.5h-1zM475.3 346.8h1v1h-1zM17.8 369.8h1v1.5h-1zM506.8 38.8h1.5v1h-1.5zM12.8 285.2h1v1h-1zM508.0 236.7h1v1.5h-1zM526.0 287.4h1v1.5h-1zM245.8 368.6h1v1.5h-1zM500.1 112.7h1.5v1h-1.5zM523.5 352.2h1v1h-1zM493.4 88.5h1v1.5h-1zM40.9 5.9h1v1.5h-1zM482.7 89.0h1v1.5h-1zM29.9 174.5h1v1.5h-1zM544.8 36.6h1v1h-1zM258.5 374.2h1.5v1.5h-1.5zM280.3 349.1h1v1.5h-1zM48.4 237.9h1v1h-1zM67.4 303.5h1v1.5h-1zM496.0 201.7h1v1h-1zM21.0 53.2h1v1.5h-1zM60.6 186.9h1v1h-1zM462.6 369.3h1v1h-1zM57.0 318.6h1v1h-1zM527.9 265.7h1v1h-1zM491.8 371.0h1v1.5h-1zM390.6 364.2h1v1h-1zM66.2 336.5h1.5v1.5h-1.5zM558.7 15.1h1.5v1h-1.5zM569.4 6.0h1v1.5h-1zM332.7 367.1h1v1.5h-1zM539.3 204.0h1.5v1h-1.5zM63.3 137.5h1v1h-1zM272.7 353.1h1.5v1h-1.5zM31.0 140.2h1.5v1.5h-1.5zM66.6 373.7h1v1h-1zM14.2 350.1h1v1h-1zM89.0 364.8h1.5v1h-1.5zM510.7 364.6h1.5v1.5h-1.5zM516.9 166.2h1.5v1h-1.5zM513.1 52.4h1v1h-1zM31.4 241.1h1v1h-1zM511.0 52.5h1v1h-1zM544.9 313.7h1.5v1.5h-1.5zM508.8 156.9h1.5v1.5h-1.5zM301.9 352.1h1.5v1h-1.5zM542.9 318.1h1.5v1h-1.5zM67.6 48.4h1.5v1h-1.5zM559.2 159.7h1v1h-1zM55.0 46.5h1.5v1h-1.5zM549.6 64.6h1v1.5h-1zM56.3 80.5h1.5v1h-1.5zM62.9 51.1h1.5v1h-1.5zM555.9 127.3h1v1h-1zM537.6 133.9h1v1h-1zM537.2 11.2h1v1h-1zM43.6 282.6h1v1h-1zM31.8 99.0h1v1.5h-1zM65.2 63.8h1v1h-1zM552.6 75.9h1v1.5h-1zM546.0 269.9h1.5v1h-1.5zM502.1 236.1h1v1.5h-1zM34.1 75.4h1v1h-1zM490.3 342.6h1v1h-1zM485.9 362.4h1v1h-1zM490.0 31.6h1v1h-1zM68.8 249.7h1.5v1h-1.5zM31.9 200.6h1v1h-1zM516.0 13.1h1v1.5h-1zM45.7 293.1h1.5v1h-1.5zM233.9 353.2h1.5v1h-1.5zM540.4 347.1h1.5v1h-1.5zM524.4 170.6h1v1h-1zM211.4 364.0h1.5v1h-1.5zM179.9 374.0h1v1.5h-1zM486.2 247.2h1v1h-1zM20.4 97.8h1v1h-1zM553.8 197.8h1v1h-1zM16.5 173.0h1v1h-1zM25.0 234.0h1.5v1.5h-1.5zM525.4 339.8h1v1.5h-1zM530.5 198.3h1v1h-1zM522.9 193.0h1v1h-1zM9.3 278.4h1v1h-1zM25.8 156.5h1v1.5h-1zM34.6 7.2h1.5v1h-1.5zM506.8 44.0h1.5v1h-1.5zM237.6 353.9h1v1h-1zM73.6 75.0h1v1h-1zM277.2 373.6h1v1.5h-1zM528.2 164.6h1v1h-1zM489.3 38.3h1.5v1h-1.5zM115.1 364.6h1v1h-1zM35.0 285.5h1.5v1h-1.5zM514.4 21.7h1.5v1.5h-1.5zM505.9 234.8h1v1.5h-1zM502.2 31.7h1v1.5h-1zM407.3 352.5h1.5v1h-1.5zM35.5 334.1h1v1h-1zM250.8 350.1h1v1h-1zM67.3 80.0h1.5v1h-1.5zM50.9 234.9h1v1h-1zM544.4 203.7h1.5v1.5h-1.5zM51.9 368.4h1v1h-1zM87.9 358.0h1v1.5h-1zM547.8 68.2h1v1h-1zM37.3 10.9h1v1h-1zM57.9 286.9h1v1h-1zM482.4 188.2h1v1h-1zM39.9 33.7h1v1.5h-1zM545.7 119.7h1v1.5h-1zM560.3 128.5h1.5v1h-1.5zM9.0 260.1h1v1.5h-1zM510.3 264.4h1.5v1h-1.5zM565.4 260.6h1v1.5h-1zM452.6 354.8h1.5v1h-1.5zM6.0 144.4h1.5v1.5h-1.5zM57.7 244.7h1v1h-1zM61.6 4.6h1.5v1h-1.5zM515.5 47.4h1v1h-1zM25.1 48.0h1.5v1.5h-1.5zM196.0 367.2h1v1h-1zM396.0 369.2h1v1.5h-1zM524.4 240.2h1v1.5h-1zM362.6 346.3h1.5v1h-1.5zM275.5 359.4h1.5v1h-1.5zM67.6 135.4h1v1h-1zM487.3 269.3h1v1h-1zM187.4 361.7h1v1h-1zM518.0 154.6h1v1h-1zM43.6 39.6h1v1h-1zM41.7 261.1h1v1h-1zM27.2 238.7h1.5v1.5h-1.5zM504.7 154.6h1v1h-1zM54.0 122.0h1v1.5h-1zM391.9 367.7h1v1h-1zM7.6 8.0h1v1h-1zM531.3 61.0h1v1.5h-1zM525.2 135.9h1v1.5h-1zM66.5 34.7h1v1h-1zM505.4 220.4h1.5v1h-1.5zM62.3 215.3h1v1h-1zM39.8 261.8h1.5v1h-1.5zM33.6 68.7h1v1h-1zM16.9 88.3h1v1h-1zM343.7 371.1h1v1h-1zM552.7 276.7h1v1.5h-1zM535.3 354.0h1.5v1.5h-1.5zM542.4 252.1h1.5v1.5h-1.5zM531.1 288.1h1.5v1h-1.5zM422.1 352.4h1v1.5h-1zM532.3 47.5h1.5v1h-1.5zM483.2 215.8h1v1h-1zM532.6 84.6h1v1h-1zM526.1 263.6h1v1h-1zM488.0 38.3h1v1h-1zM538.7 44.1h1v1.5h-1zM66.5 45.9h1.5v1h-1.5zM13.1 215.4h1v1.5h-1zM36.2 341.7h1v1h-1zM22.3 216.2h1v1.5h-1zM519.1 374.8h1.5v1h-1.5zM50.7 341.9h1v1h-1zM54.5 131.2h1v1.5h-1zM27.3 119.6h1v1h-1zM502.8 151.4h1v1h-1zM543.0 195.7h1v1h-1zM196.7 373.8h1.5v1.5h-1.5zM552.7 127.1h1.5v1h-1.5zM61.1 131.5h1v1h-1zM3.3 332.2h1v1h-1zM67.7 183.9h1.5v1.5h-1.5zM72.6 282.4h1v1.5h-1zM47.1 161.3h1.5v1.5h-1.5zM65.6 99.1h1.5v1h-1.5zM565.8 222.3h1v1h-1zM505.7 49.1h1v1h-1zM298.5 358.1h1v1.5h-1zM42.7 164.6h1.5v1h-1.5zM501.1 297.3h1.5v1.5h-1.5zM528.5 101.7h1.5v1h-1.5zM557.9 292.6h1v1.5h-1zM31.8 260.2h1v1h-1zM554.5 226.3h1v1.5h-1zM525.3 144.1h1.5v1.5h-1.5zM484.8 136.3h1v1h-1zM60.4 218.7h1.5v1h-1.5zM300.6 356.7h1.5v1h-1.5zM540.5 170.8h1v1.5h-1zM61.8 29.3h1v1h-1zM511.0 189.3h1v1h-1zM535.9 15.0h1.5v1h-1.5zM136.3 374.9h1v1.5h-1zM50.9 67.4h1v1h-1zM557.1 21.5h1.5v1.5h-1.5zM41.6 146.0h1v1h-1zM65.2 170.9h1v1h-1zM494.8 358.2h1v1h-1zM44.4 251.2h1v1.5h-1zM562.2 353.1h1.5v1.5h-1.5zM542.9 365.4h1v1h-1zM517.6 242.5h1v1h-1zM535.6 294.1h1v1.5h-1zM554.9 72.4h1v1.5h-1zM72.0 44.5h1v1.5h-1zM14.6 4.3h1v1h-1zM418.5 369.8h1v1h-1zM532.9 235.9h1.5v1h-1.5zM507.1 238.2h1v1h-1zM197.7 374.1h1v1h-1zM69.3 227.9h1.5v1.5h-1.5zM52.4 266.2h1v1.5h-1zM500.0 357.3h1v1h-1zM5.5 258.8h1v1h-1zM12.1 6.7h1.5v1h-1.5zM54.2 301.7h1v1h-1zM59.9 121.4h1v1h-1zM494.8 97.6h1v1h-1zM72.0 324.1h1v1.5h-1zM59.6 78.5h1.5v1.5h-1.5zM555.8 326.3h1v1h-1zM39.1 159.1h1.5v1.5h-1.5zM62.8 6.2h1v1h-1zM65.7 336.5h1v1h-1zM0.6 328.3h1v1h-1zM53.5 114.5h1v1h-1zM7.7 132.6h1.5v1.5h-1.5zM488.5 339.2h1v1h-1zM61.5 103.0h1.5v1h-1.5zM70.1 299.0h1v1h-1zM36.8 110.8h1v1h-1zM509.0 346.0h1v1.5h-1zM54.7 198.0h1.5v1.5h-1.5zM492.7 45.7h1.5v1.5h-1.5zM563.8 2.4h1.5v1h-1.5zM65.4 0.0h1v1.5h-1zM55.2 76.8h1.5v1h-1.5zM19.4 244.6h1v1h-1zM489.4 52.7h1.5v1h-1.5zM492.8 128.1h1.5v1.5h-1.5zM23.8 13.4h1.5v1h-1.5zM490.4 256.4h1.5v1h-1.5zM29.7 287.9h1v1.5h-1zM506.4 298.2h1v1.5h-1zM534.9 77.4h1v1h-1zM519.9 316.4h1v1.5h-1zM62.2 145.9h1.5v1h-1.5zM489.4 352.7h1.5v1.5h-1.5zM45.3 337.3h1v1h-1zM65.2 14.5h1v1.5h-1zM44.2 166.9h1v1h-1zM268.3 366.0h1v1h-1zM533.2 84.4h1.5v1.5h-1.5zM65.8 90.6h1v1h-1zM518.3 253.5h1.5v1h-1.5zM67.2 153.6h1v1.5h-1zM4.4 223.0h1v1h-1zM54.7 207.6h1v1h-1zM500.2 13.4h1v1h-1zM542.0 322.3h1v1h-1zM64.0 331.2h1v1h-1zM552.5 122.3h1v1h-1zM64.7 262.1h1v1h-1zM485.1 153.8h1v1h-1zM499.1 201.5h1v1.5h-1zM28.1 79.1h1v1.5h-1zM7.8 317.9h1.5v1h-1.5zM523.8 35.9h1v1h-1zM20.8 259.1h1v1h-1zM525.5 254.4h1.5v1h-1.5zM519.6 160.2h1v1.5h-1zM437.2 351.3h1.5v1.5h-1.5zM493.7 321.6h1v1.5h-1zM519.3 344.3h1v1.5h-1zM59.2 138.9h1.5v1h-1.5zM12.4 304.3h1.5v1.5h-1.5zM553.3 329.9h1.5v1h-1.5zM113.1 365.6h1v1.5h-1zM51.4 92.0h1v1h-1zM54.6 48.3h1v1h-1zM40.8 183.6h1.5v1h-1.5zM447.7 368.8h1v1.5h-1zM22.7 326.3h1v1.5h-1zM10.0 122.1h1.5v1h-1.5zM47.9 35.6h1.5v1h-1.5zM541.7 96.6h1v1h-1zM550.1 298.4h1v1.5h-1zM485.8 363.9h1.5v1h-1.5zM47.4 281.3h1v1h-1zM564.1 141.1h1v1.5h-1zM513.3 104.9h1.5v1h-1.5zM1.9 312.0h1.5v1h-1.5zM16.6 84.3h1.5v1h-1.5zM51.9 139.2h1.5v1h-1.5zM17.6 217.2h1.5v1.5h-1.5zM518.1 92.1h1v1h-1zM227.7 348.7h1v1h-1zM482.8 285.0h1v1.5h-1zM538.5 59.5h1v1.5h-1zM567.8 152.6h1v1h-1zM215.4 348.2h1.5v1h-1.5zM553.1 21.0h1v1h-1zM47.5 74.2h1v1.5h-1zM63.6 333.3h1v1.5h-1zM557.0 355.6h1v1.5h-1zM527.4 166.6h1.5v1h-1.5zM528.7 79.1h1v1h-1zM42.4 60.3h1.5v1.5h-1.5zM555.3 293.5h1.5v1h-1.5zM487.7 219.7h1.5v1h-1.5zM496.2 349.1h1v1h-1zM108.9 370.4h1v1h-1zM9.0 362.6h1v1h-1zM62.4 61.1h1v1h-1zM514.6 48.2h1v1.5h-1zM558.3 5.4h1v1h-1zM497.0 290.3h1v1.5h-1zM131.3 356.1h1v1h-1zM57.1 62.3h1.5v1h-1.5zM86.7 354.3h1v1h-1zM508.8 46.4h1.5v1h-1.5zM568.5 310.7h1.5v1.5h-1.5zM527.4 143.9h1.5v1.5h-1.5zM535.9 305.7h1v1.5h-1zM57.7 271.4h1v1.5h-1zM549.8 322.4h1v1h-1zM68.2 367.5h1.5v1h-1.5zM50.8 355.8h1.5v1h-1.5zM34.7 209.5h1v1h-1zM556.2 36.5h1v1.5h-1zM533.0 40.5h1.5v1.5h-1.5zM547.4 184.5h1v1h-1zM33.4 369.4h1.5v1.5h-1.5zM483.2 34.2h1.5v1.5h-1.5zM174.4 373.1h1.5v1.5h-1.5zM50.8 335.4h1.5v1.5h-1.5zM484.1 191.3h1v1h-1zM525.6 77.5h1v1h-1zM513.6 307.1h1.5v1h-1.5zM482.5 75.5h1v1h-1zM287.1 366.4h1.5v1h-1.5zM63.5 24.5h1v1.5h-1zM518.8 89.4h1v1h-1zM558.7 239.4h1v1h-1zM540.4 274.2h1v1h-1zM531.8 230.2h1v1.5h-1zM518.8 154.0h1.5v1h-1.5zM22.4 331.0h1v1h-1zM11.3 184.9h1v1h-1zM566.0 297.4h1.5v1h-1.5zM560.6 186.0h1.5v1h-1.5zM155.5 374.2h1.5v1h-1.5zM566.4 159.6h1v1h-1zM490.7 166.4h1v1h-1zM565.4 61.1h1.5v1h-1.5zM551.8 94.6h1v1h-1zM35.8 129.4h1.5v1h-1.5zM45.6 287.4h1v1.5h-1zM546.8 214.0h1v1h-1zM8.0 297.6h1v1h-1zM279.6 359.8h1v1.5h-1zM73.0 212.6h1v1h-1zM522.0 365.7h1.5v1h-1.5zM553.5 86.1h1v1h-1zM46.3 184.6h1.5v1h-1.5zM1.7 133.9h1.5v1h-1.5zM446.7 359.7h1v1.5h-1zM34.5 332.7h1.5v1h-1.5zM179.0 352.3h1v1.5h-1zM22.4 192.4h1.5v1h-1.5zM58.3 61.4h1v1h-1zM11.0 287.8h1.5v1.5h-1.5zM305.7 344.1h1v1h-1zM498.3 75.3h1.5v1h-1.5zM31.0 235.4h1v1h-1zM429.7 346.2h1.5v1h-1.5zM368.1 365.1h1v1h-1zM68.4 53.3h1v1h-1zM524.1 279.8h1v1h-1zM21.2 162.6h1v1h-1zM212.8 352.3h1v1h-1zM552.5 300.8h1v1.5h-1zM55.9 258.9h1v1.5h-1zM525.7 171.0h1v1.5h-1zM221.3 347.8h1v1h-1zM57.9 52.3h1.5v1.5h-1.5zM13.5 186.6h1v1h-1zM272.4 365.0h1.5v1h-1.5zM524.0 321.6h1v1h-1zM555.9 200.3h1v1h-1zM70.9 141.6h1v1h-1zM282.2 351.5h1v1.5h-1zM482.9 104.3h1v1h-1zM446.8 348.1h1v1h-1zM544.0 34.3h1v1h-1zM533.1 91.8h1v1.5h-1zM486.6 242.5h1v1h-1zM558.1 137.1h1v1.5h-1zM522.0 34.7h1v1h-1zM45.2 350.4h1v1h-1zM29.7 246.1h1.5v1h-1.5zM9.8 361.5h1v1h-1zM506.6 175.4h1.5v1h-1.5zM13.6 183.2h1v1h-1zM57.7 279.9h1v1h-1zM503.4 160.5h1v1h-1zM545.2 217.0h1.5v1h-1.5zM124.8 359.5h1v1h-1zM540.6 249.2h1v1h-1zM532.6 298.4h1v1h-1zM560.7 137.9h1.5v1h-1.5zM238.2 349.9h1v1.5h-1zM41.9 289.7h1.5v1h-1.5zM521.8 213.0h1v1h-1zM543.9 156.3h1v1h-1zM24.0 52.8h1v1h-1zM566.4 230.3h1v1.5h-1zM529.6 343.7h1v1h-1zM485.7 307.1h1.5v1h-1.5zM495.1 275.5h1v1.5h-1zM56.7 350.1h1v1.5h-1zM568.8 260.0h1v1h-1zM110.7 372.7h1v1h-1zM566.0 85.3h1v1.5h-1zM489.8 305.2h1.5v1.5h-1.5zM498.8 216.8h1v1h-1zM22.9 375.3h1.5v1h-1.5zM124.3 360.7h1.5v1h-1.5zM489.1 249.0h1v1h-1zM27.9 1.1h1v1h-1zM562.3 207.5h1v1h-1zM11.2 289.0h1v1.5h-1zM564.2 206.3h1v1.5h-1zM20.9 4.4h1v1h-1zM53.3 94.1h1.5v1.5h-1.5zM534.8 90.7h1v1.5h-1zM415.3 348.3h1v1h-1zM505.9 37.6h1v1.5h-1zM15.3 36.7h1v1.5h-1zM72.3 20.2h1.5v1h-1.5zM28.9 322.7h1v1h-1zM45.7 285.8h1.5v1h-1.5zM6.6 10.3h1v1.5h-1zM17.3 121.3h1.5v1.5h-1.5zM46.2 258.7h1v1h-1zM487.9 209.9h1v1.5h-1zM507.4 344.1h1v1.5h-1zM418.0 361.8h1.5v1h-1.5zM284.1 350.0h1v1.5h-1zM37.4 261.9h1v1.5h-1zM288.0 345.2h1.5v1h-1.5zM53.9 225.5h1.5v1h-1.5zM503.0 321.4h1v1.5h-1zM547.6 322.8h1.5v1.5h-1.5zM70.2 197.8h1v1h-1zM536.7 228.1h1v1h-1zM27.1 138.5h1.5v1h-1.5zM567.4 373.0h1v1h-1zM398.8 372.2h1v1.5h-1zM176.4 354.6h1.5v1.5h-1.5zM17.1 302.5h1v1.5h-1zM53.3 207.0h1v1h-1zM0.6 251.1h1.5v1h-1.5zM491.9 252.4h1v1h-1zM13.0 352.2h1v1h-1zM553.1 74.6h1v1h-1zM543.9 118.1h1v1h-1zM530.4 157.9h1v1.5h-1zM528.5 44.7h1v1h-1zM490.3 5.8h1v1.5h-1zM559.6 52.2h1v1.5h-1zM544.3 209.6h1.5v1h-1.5zM523.6 319.9h1.5v1.5h-1.5zM309.1 366.6h1.5v1h-1.5zM357.9 366.0h1.5v1h-1.5zM355.5 344.2h1.5v1h-1.5zM566.7 14.4h1v1.5h-1zM71.2 105.1h1.5v1h-1.5zM542.4 257.0h1v1h-1zM495.0 83.6h1.5v1h-1.5zM14.6 242.8h1v1.5h-1zM4.3 115.3h1.5v1.5h-1.5zM541.9 36.6h1v1h-1zM482.6 262.1h1v1h-1zM74.0 317.6h1v1h-1zM33.3 122.0h1.5v1h-1.5zM335.3 362.7h1v1.5h-1zM82.1 362.1h1v1h-1zM251.4 357.0h1v1.5h-1zM3.6 137.7h1.5v1.5h-1.5zM119.2 360.5h1v1.5h-1zM537.0 122.4h1.5v1.5h-1.5zM69.6 272.5h1.5v1h-1.5zM165.2 354.2h1v1h-1zM329.2 358.4h1.5v1.5h-1.5zM66.4 335.9h1.5v1h-1.5zM25.3 286.1h1.5v1h-1.5zM34.7 315.0h1v1h-1zM543.8 327.9h1v1h-1zM65.6 290.0h1v1h-1zM520.6 15.7h1v1h-1zM7.6 67.2h1.5v1h-1.5zM57.3 107.0h1.5v1h-1.5zM530.5 269.1h1v1h-1zM533.0 206.7h1v1h-1zM30.7 46.3h1v1h-1zM48.7 160.3h1v1h-1zM545.3 212.2h1v1h-1zM157.4 354.6h1v1.5h-1zM569.9 302.2h1.5v1h-1.5zM529.7 148.5h1v1.5h-1zM68.6 155.9h1.5v1h-1.5zM276.4 358.2h1.5v1h-1.5zM287.5 373.4h1v1h-1zM539.7 332.2h1.5v1h-1.5zM26.7 178.3h1v1h-1zM223.5 354.7h1v1.5h-1zM551.6 361.0h1v1.5h-1zM86.3 371.3h1.5v1.5h-1.5zM376.9 371.2h1v1h-1zM205.4 359.5h1v1h-1zM530.9 24.6h1.5v1h-1.5zM351.9 344.1h1.5v1h-1.5zM494.0 123.1h1v1.5h-1zM493.2 295.4h1.5v1.5h-1.5zM508.7 214.8h1v1h-1zM549.9 72.3h1.5v1h-1.5zM549.7 179.9h1v1h-1zM493.8 200.1h1v1.5h-1zM72.9 252.6h1v1.5h-1zM18.9 228.9h1v1h-1zM8.9 258.0h1.5v1.5h-1.5zM330.2 371.6h1v1.5h-1zM561.6 180.9h1v1h-1zM20.8 33.7h1.5v1.5h-1.5zM515.6 312.7h1.5v1h-1.5zM556.2 370.5h1v1h-1zM526.8 267.6h1v1h-1zM1.2 23.7h1v1h-1zM17.0 316.3h1.5v1.5h-1.5zM315.2 349.1h1.5v1h-1.5zM560.0 119.0h1v1h-1zM42.5 7.3h1v1h-1zM52.5 4.9h1v1h-1zM494.5 266.6h1v1h-1zM522.3 101.1h1v1.5h-1zM567.2 248.3h1.5v1h-1.5zM399.9 371.6h1.5v1.5h-1.5zM179.2 360.0h1v1h-1zM537.5 125.7h1v1h-1zM520.6 99.4h1v1h-1zM60.0 208.1h1v1h-1zM33.3 182.5h1.5v1h-1.5zM3.6 24.8h1.5v1.5h-1.5zM327.4 366.5h1v1h-1zM547.7 60.0h1.5v1h-1.5zM61.1 185.5h1.5v1h-1.5zM168.1 354.4h1v1.5h-1zM63.3 80.7h1v1h-1zM551.0 246.2h1v1h-1zM313.9 350.0h1.5v1.5h-1.5zM41.0 112.8h1v1h-1zM564.6 126.6h1v1.5h-1zM33.8 362.4h1.5v1h-1.5zM545.2 249.0h1v1h-1zM8.7 296.1h1.5v1h-1.5zM429.9 374.5h1.5v1h-1.5zM3.5 71.1h1v1h-1zM502.0 213.9h1v1h-1zM214.0 354.4h1.5v1h-1.5zM30.8 207.3h1.5v1h-1.5zM5.8 47.6h1v1h-1zM514.8 36.1h1v1h-1zM564.7 33.7h1.5v1.5h-1.5zM34.5 218.5h1v1h-1zM245.9 368.4h1.5v1h-1.5zM552.1 96.2h1.5v1h-1.5zM57.8 193.5h1v1.5h-1zM418.9 356.9h1.5v1.5h-1.5zM517.2 267.4h1.5v1.5h-1.5zM414.8 344.5h1v1h-1zM224.0 350.1h1.5v1h-1.5zM49.9 128.5h1.5v1h-1.5zM184.2 353.4h1v1h-1zM486.5 90.1h1v1h-1zM531.2 29.9h1v1h-1zM471.6 347.8h1v1h-1zM528.7 138.2h1.5v1h-1.5zM20.7 346.2h1.5v1h-1.5zM15.3 242.5h1.5v1h-1.5zM509.0 209.9h1v1.5h-1zM51.1 323.0h1.5v1h-1.5z"/><path fill="#9c9c9c" d="M52.9 36.4h1.8v1.4h-1.8zM120.3 354.5h1.4v1h-1.4zM543.5 346.8h1.8v1.4h-1.8zM206.9 370.5h1v1h-1zM44.9 275.2h1.8v1h-1.8zM526.3 166.6h1.8v1h-1.8zM28.8 375.7h1v1h-1zM42.9 332.0h1.8v1h-1.8zM58.6 293.3h1.4v2h-1.4zM559.3 201.6h1v1.4h-1zM245.8 356.8h1.8v1.4h-1.8zM65.3 308.1h1v2h-1zM58.1 290.5h1.8v1h-1.8zM495.0 184.6h1.8v1.4h-1.8zM536.4 179.6h1.4v1.4h-1.4zM568.3 163.9h1v1.4h-1zM164.3 355.4h1.8v1h-1.8zM525.5 191.1h1v1.4h-1zM485.5 320.5h1.4v1.4h-1.4zM504.0 211.1h1v2h-1zM36.0 309.8h1.4v2h-1.4zM504.7 246.3h1.8v1.4h-1.8zM157.3 364.0h1.4v1h-1.4zM513.3 1.1h1v1h-1zM65.2 246.2h1.8v2h-1.8zM493.3 161.7h1.4v1.4h-1.4zM536.4 159.0h1v1.4h-1zM15.0 349.3h1.4v1h-1.4zM65.0 191.7h1.4v1.4h-1.4zM545.9 169.4h1.4v2h-1.4zM46.5 249.5h1.4v2h-1.4zM52.3 342.3h1.4v1h-1.4zM522.9 177.6h1.8v1.4h-1.8zM45.2 96.2h1.8v2h-1.8zM25.3 205.3h1v2h-1zM526.9 195.2h1.8v1.4h-1.8zM45.0 226.5h1.8v1.4h-1.8zM486.1 170.0h1.4v1h-1.4zM560.3 48.8h1v1.4h-1zM532.8 84.8h1.8v1.4h-1.8zM538.8 190.0h1v2h-1zM484.7 14.0h1.4v1h-1.4zM532.3 13.7h1.4v1h-1.4zM533.9 361.8h1v1h-1zM549.4 140.8h1.4v1.4h-1.4zM540.7 330.8h1.8v2h-1.8zM559.4 176.5h1v1.4h-1zM506.9 372.4h1.8v1h-1.8zM363.5 351.1h1.8v1.4h-1.8zM483.3 245.8h1v1h-1zM188.8 367.5h1.8v1h-1.8zM529.4 118.2h1.8v1h-1.8zM513.6 340.4h1.8v2h-1.8zM59.6 156.4h1v2h-1zM35.7 38.3h1v1.4h-1zM65.1 291.4h1.4v2h-1.4zM564.2 38.5h1v1.4h-1zM491.5 32.7h1v1h-1zM533.7 138.8h1.4v2h-1.4zM5.3 261.5h1.4v2h-1.4zM58.4 117.8h1v1.4h-1zM31.1 337.6h1.4v1.4h-1.4zM547.4 13.3h1.8v2h-1.8zM26.2 150.7h1.4v1.4h-1.4zM527.8 147.8h1.4v1.4h-1.4zM99.1 358.0h1.8v2h-1.8zM567.9 82.5h1.4v1.4h-1.4zM81.0 356.6h1.4v2h-1.4zM408.7 345.5h1.4v1h-1.4zM12.5 220.6h1v2h-1zM362.6 362.1h1.8v2h-1.8zM28.3 215.0h1v1h-1zM494.1 178.5h1.4v1.4h-1.4zM561.1 365.5h1v1h-1zM568.4 235.8h1.4v1.4h-1.4zM494.5 330.9h1.4v1.4h-1.4zM50.9 166.1h1.4v2h-1.4zM15.6 18.7h1v1h-1zM4.2 375.8h1.4v2h-1.4zM32.4 322.4h1.4v2h-1.4zM520.2 356.0h1.8v1h-1.8zM496.7 158.1h1.4v1.4h-1.4zM37.2 17.2h1.4v2h-1.4zM66.1 320.1h1v1h-1zM16.4 257.4h1v1.4h-1zM483.8 320.3h1v1.4h-1zM526.9 293.7h1.8v2h-1.8zM155.9 362.3h1.4v1h-1.4zM505.3 192.6h1.8v1.4h-1.8zM559.4 244.4h1.8v2h-1.8zM509.5 200.7h1.4v1h-1.4zM494.8 278.0h1.8v2h-1.8zM528.1 145.7h1.8v1.4h-1.8zM560.6 28.0h1.8v2h-1.8zM302.4 374.7h1.8v1h-1.8zM40.2 308.9h1.4v1.4h-1.4zM540.8 247.9h1.8v2h-1.8zM61.9 76.1h1.8v2h-1.8zM340.6 355.6h1.8v1.4h-1.8zM41.3 110.6h1.8v1.4h-1.8zM57.4 136.0h1v2h-1zM284.8 374.3h1.8v2h-1.8zM11.3 45.6h1.8v1h-1.8zM20.0 134.2h1.4v1.4h-1.4zM0.1 306.6h1.4v1.4h-1.4zM494.6 225.1h1v1h-1zM36.1 363.7h1v2h-1zM501.5 163.3h1v1h-1zM384.0 375.0h1.8v2h-1.8zM540.9 348.5h1.4v1h-1.4zM172.3 374.5h1.4v1h-1.4zM87.1 364.9h1.4v1.4h-1.4zM252.5 351.1h1.8v1.4h-1.8zM528.4 370.6h1.4v2h-1.4zM486.7 250.8h1.4v1.4h-1.4zM25.9 131.5h1v1h-1zM324.3 361.0h1v1.4h-1zM20.8 145.7h1v1h-1zM154.5 354.7h1.8v1h-1.8zM72.6 38.7h1v1.4h-1zM485.9 23.5h1v1h-1zM18.9 370.0h1.8v1h-1.8zM1.9 358.8h1.4v1h-1.4zM109.4 371.0h1.8v1.4h-1.8zM24.7 278.4h1v1h-1zM55.9 277.4h1.4v1h-1.4zM452.9 358.2h1.8v2h-1.8zM487.4 32.5h1.4v1h-1.4zM531.4 193.5h1.4v1h-1.4zM484.2 254.6h1.8v1.4h-1.8zM344.9 354.7h1.4v1.4h-1.4zM24.1 310.7h1.4v1.4h-1.4zM33.4 120.2h1v1.4h-1zM562.9 196.7h1v2h-1zM51.7 318.0h1.8v1.4h-1.8zM486.1 341.0h1.8v2h-1.8zM511.2 252.5h1.4v2h-1.4zM4.5 361.2h1.4v1.4h-1.4zM522.1 237.4h1.8v1.4h-1.8zM568.1 353.2h1.8v2h-1.8zM25.2 48.1h1.4v2h-1.4zM514.6 99.0h1.4v2h-1.4zM53.0 193.0h1.8v1h-1.8zM194.6 345.2h1v1h-1zM549.0 253.8h1v1h-1zM533.1 340.3h1v2h-1zM390.4 346.6h1.8v2h-1.8zM523.3 337.7h1.8v2h-1.8zM504.9 263.5h1.8v2h-1.8zM70.6 284.5h1.4v1.4h-1.4zM55.9 267.6h1v1h-1zM538.1 138.9h1.8v1.4h-1.8zM511.2 45.2h1v1h-1zM56.3 53.6h1.4v1.4h-1.4zM139.7 358.2h1.8v1.4h-1.8zM23.8 305.6h1.8v1.4h-1.8zM44.2 11.6h1.8v1.4h-1.8zM4.8 174.0h1.4v1h-1.4zM534.6 241.0h1v1.4h-1zM55.1 180.5h1.8v2h-1.8zM269.9 360.5h1.4v2h-1.4zM32.7 190.7h1v1.4h-1zM59.8 329.4h1.4v1h-1.4zM520.2 135.3h1v1h-1zM197.6 374.8h1.8v2h-1.8zM482.1 161.2h1.4v1h-1.4zM17.2 52.2h1.4v2h-1.4zM5.5 304.7h1.4v1h-1.4zM13.2 295.3h1v1.4h-1zM6.3 122.9h1.4v1h-1.4zM515.0 77.6h1.4v1.4h-1.4zM51.9 243.0h1.4v2h-1.4zM504.8 59.4h1.8v1.4h-1.8zM541.5 52.7h1v1h-1zM15.9 5.5h1.8v2h-1.8zM11.3 143.4h1.4v2h-1.4zM562.9 26.8h1v1.4h-1zM175.6 371.1h1v1h-1zM540.6 169.4h1v1h-1zM555.9 328.3h1v1.4h-1zM496.2 151.1h1v1h-1zM107.1 370.8h1.4v1h-1.4zM91.3 349.3h1.4v1h-1.4zM35.3 201.4h1.4v1.4h-1.4zM60.8 3.5h1.4v1h-1.4zM493.5 20.4h1.4v1.4h-1.4zM511.4 78.9h1v2h-1zM541.7 160.6h1v1h-1zM70.7 283.1h1v1h-1zM550.8 64.5h1.8v1h-1.8zM538.5 254.4h1v2h-1zM558.3 83.6h1v1h-1zM162.9 349.5h1v1.4h-1zM549.8 253.6h1.8v1h-1.8zM526.1 349.3h1.8v1h-1.8zM533.2 335.6h1v1.4h-1zM18.0 250.5h1.8v1.4h-1.8zM57.4 69.5h1.4v1.4h-1.4zM7.8 207.5h1.4v1.4h-1.4zM486.5 341.0h1.4v1.4h-1.4zM544.8 22.9h1v2h-1zM554.2 122.0h1.8v1.4h-1.8zM32.6 306.8h1v2h-1zM550.2 66.5h1.8v2h-1.8zM7.7 363.4h1v2h-1zM526.3 345.9h1.8v1h-1.8zM522.3 248.8h1.8v1h-1.8zM454.2 367.1h1v2h-1zM34.0 131.4h1v1.4h-1zM43.9 214.0h1v1h-1zM554.7 196.1h1v2h-1zM53.2 270.1h1.8v2h-1.8zM496.2 205.7h1v1.4h-1zM53.6 118.0h1v1h-1zM526.8 353.4h1.4v1h-1.4zM417.1 345.0h1.4v1h-1.4zM492.7 42.7h1.4v1.4h-1.4zM71.7 168.9h1v1h-1zM511.1 188.8h1.8v1.4h-1.8zM353.6 347.9h1v1h-1zM51.1 6.2h1v1.4h-1zM408.3 355.8h1.8v1h-1.8zM519.6 106.9h1.4v1h-1.4zM514.3 138.7h1v2h-1zM47.2 210.0h1.8v2h-1.8zM7.5 81.3h1v1.4h-1zM28.0 143.8h1v1.4h-1zM1.8 69.6h1.8v1.4h-1.8zM11.9 366.4h1v2h-1zM323.3 372.4h1.8v2h-1.8zM11.8 368.0h1.8v1h-1.8zM62.8 3.1h1v1.4h-1zM28.4 51.8h1.8v2h-1.8zM546.4 210.8h1.8v1.4h-1.8zM3.4 303.6h1.4v1h-1.4zM551.3 51.3h1.8v1h-1.8zM490.8 79.3h1.8v1.4h-1.8zM526.4 25.6h1.4v1.4h-1.4zM49.0 9.1h1v1h-1zM512.9 320.9h1.4v1.4h-1.4zM35.5 185.6h1.8v2h-1.8zM20.2 368.9h1.8v2h-1.8zM31.6 290.9h1.8v2h-1.8zM495.3 91.8h1.4v2h-1.4zM550.1 22.5h1.4v1.4h-1.4zM434.9 352.4h1.4v1.4h-1.4zM8.7 300.6h1v1h-1zM25.4 349.8h1v1h-1zM57.6 326.9h1v2h-1zM524.8 357.2h1.8v1.4h-1.8zM543.5 15.8h1.8v1h-1.8zM71.9 170.6h1.8v2h-1.8zM523.9 45.1h1.4v1.4h-1.4zM381.2 364.1h1.8v1h-1.8zM19.3 282.0h1.4v2h-1.4zM566.1 273.6h1.8v2h-1.8zM61.7 84.2h1.4v1h-1.4zM425.7 374.6h1v2h-1zM38.1 239.3h1.4v2h-1.4zM486.4 227.4h1.8v2h-1.8zM563.8 34.3h1v1h-1zM480.0 359.2h1.4v2h-1.4zM485.0 31.1h1v1h-1zM388.1 354.4h1.8v2h-1.8zM292.0 346.8h1.8v2h-1.8zM189.9 360.9h1.4v1h-1.4zM45.6 2.6h1.8v2h-1.8zM556.8 239.8h1.4v2h-1.4zM558.8 29.6h1.8v1.4h-1.8zM437.1 370.1h1.8v1.4h-1.8zM527.0 59.0h1.4v1.4h-1.4zM498.6 65.9h1v1.4h-1zM446.3 360.0h1.8v1h-1.8zM520.2 340.8h1.8v1h-1.8zM18.7 235.5h1.8v1h-1.8zM154.7 361.6h1.8v1h-1.8zM52.1 71.4h1v1h-1zM542.3 112.7h1v1.4h-1zM149.8 351.3h1.4v1h-1.4zM515.9 167.6h1v1.4h-1zM41.7 257.2h1.4v1.4h-1.4zM468.3 347.9h1.8v2h-1.8zM14.9 226.3h1v2h-1zM540.4 9.6h1.8v1h-1.8zM52.9 65.8h1.8v2h-1.8zM488.8 133.4h1v1.4h-1zM98.3 352.0h1.8v2h-1.8zM506.6 12.9h1.4v1h-1.4zM511.9 165.6h1.8v1h-1.8zM563.0 100.3h1.4v1.4h-1.4zM315.4 353.3h1.8v1h-1.8zM490.2 197.4h1.4v2h-1.4zM554.1 367.1h1.4v1h-1.4zM417.1 360.9h1v2h-1zM60.0 289.5h1.8v1.4h-1.8zM16.2 171.7h1.4v2h-1.4zM63.5 218.8h1.8v2h-1.8zM51.6 224.8h1.4v1.4h-1.4zM36.4 133.3h1.4v2h-1.4zM558.7 220.7h1.8v1h-1.8zM354.6 351.7h1v1.4h-1zM27.3 10.5h1.4v1h-1.4zM56.2 357.2h1.8v1.4h-1.8zM515.5 248.0h1.4v1h-1.4zM68.1 309.4h1v2h-1zM32.2 142.9h1.8v1h-1.8zM14.4 165.6h1.8v2h-1.8zM292.7 369.2h1v1.4h-1zM5.5 5.1h1.8v1h-1.8zM496.7 173.2h1.8v1h-1.8zM79.1 345.2h1v1h-1zM555.3 99.0h1.8v1h-1.8zM538.8 151.6h1.4v1.4h-1.4zM219.8 357.1h1.4v1.4h-1.4zM552.4 22.5h1v1.4h-1zM538.4 258.8h1.4v2h-1.4zM503.4 75.2h1v2h-1zM1.1 244.5h1.4v2h-1.4zM59.2 1.5h1.8v1h-1.8zM22.0 183.3h1.4v1.4h-1.4zM5.9 48.3h1v2h-1zM62.5 58.2h1v1.4h-1zM38.2 32.8h1.8v1.4h-1.8zM40.4 250.8h1v1h-1zM517.3 180.2h1.8v1.4h-1.8zM37.8 31.9h1v2h-1zM358.6 351.2h1.8v2h-1.8zM512.1 142.7h1v2h-1zM489.3 104.7h1v1.4h-1zM41.8 374.0h1v2h-1zM518.4 333.5h1v2h-1zM542.7 112.9h1v1h-1zM277.3 375.2h1.4v2h-1.4zM22.5 0.1h1v1.4h-1zM69.9 242.3h1.8v2h-1.8zM37.7 11.8h1.4v1.4h-1.4zM452.8 355.1h1v1.4h-1zM10.4 343.6h1v1h-1zM202.6 371.4h1.8v1.4h-1.8zM31.3 112.9h1v2h-1zM530.9 226.7h1.4v1h-1.4zM508.1 16.0h1.4v2h-1.4zM60.9 59.7h1v1h-1zM492.4 315.6h1.4v1h-1.4zM545.6 40.3h1.4v1h-1.4zM509.1 35.1h1.8v1h-1.8zM541.5 350.5h1.8v1.4h-1.8zM305.2 348.6h1v2h-1zM443.8 358.4h1.8v1h-1.8zM71.7 22.8h1v1.4h-1zM167.5 360.7h1v2h-1zM559.9 124.7h1.4v2h-1.4zM486.2 89.8h1v1.4h-1zM69.6 273.9h1v1h-1zM72.9 224.5h1v2h-1zM532.3 261.5h1.4v1h-1.4zM536.0 80.0h1v1.4h-1zM511.6 133.8h1.8v2h-1.8zM559.3 171.5h1.4v1h-1.4zM67.1 287.2h1v2h-1zM511.3 284.6h1.4v1h-1.4zM511.4 361.0h1v1h-1zM56.0 312.3h1v2h-1zM526.6 45.2h1.4v1.4h-1.4zM23.1 11.1h1.4v1h-1.4zM190.9 364.5h1v1h-1zM497.3 272.6h1.4v1h-1.4zM559.7 212.6h1v1.4h-1zM6.1 319.4h1v2h-1zM490.7 186.7h1.8v1h-1.8zM49.1 147.9h1.4v1h-1.4zM536.1 205.4h1.8v1h-1.8zM563.9 181.7h1.4v1.4h-1.4zM58.3 323.5h1v2h-1zM58.3 20.0h1.8v1.4h-1.8zM549.6 296.8h1.8v1h-1.8zM78.8 357.7h1.8v1h-1.8zM95.5 348.5h1.8v1.4h-1.8zM551.6 271.3h1v2h-1zM61.2 222.9h1v1.4h-1zM45.4 18.0h1.4v2h-1.4zM535.1 346.7h1.4v1.4h-1.4zM58.2 341.4h1v1h-1zM64.9 229.6h1v2h-1zM503.6 318.9h1v1h-1zM514.1 205.2h1v1h-1zM6.6 64.9h1.4v2h-1.4zM38.8 8.3h1v1.4h-1zM1.6 150.7h1v1h-1zM567.0 92.6h1.8v1h-1.8zM531.2 160.0h1v1h-1zM519.1 320.3h1.4v2h-1.4zM566.2 2.3h1.8v1h-1.8zM204.3 350.0h1.4v1.4h-1.4zM96.2 369.8h1v1.4h-1zM38.3 294.8h1v1.4h-1zM502.2 4.4h1.8v2h-1.8zM70.3 201.8h1.8v2h-1.8zM522.1 1.3h1.4v1.4h-1.4zM55.0 253.0h1.8v1h-1.8zM565.4 189.2h1.8v1.4h-1.8zM566.4 27.3h1.8v1.4h-1.8zM24.9 136.4h1.4v1h-1.4zM25.0 173.9h1.8v1.4h-1.8zM218.1 369.0h1.4v1.4h-1.4zM30.3 306.9h1.8v1h-1.8zM57.1 292.9h1v2h-1zM18.2 106.2h1.4v1h-1.4zM545.7 233.9h1.8v1h-1.8zM34.9 70.2h1.8v1h-1.8zM510.9 125.8h1.4v1.4h-1.4zM145.8 369.7h1.8v2h-1.8zM42.2 112.3h1v1h-1zM552.7 147.9h1v1.4h-1zM524.2 277.8h1.8v2h-1.8zM505.8 270.8h1.4v1.4h-1.4zM326.4 347.9h1.4v2h-1.4zM59.4 341.2h1v2h-1zM110.6 362.8h1.8v1h-1.8zM56.9 242.4h1.8v1h-1.8z"/><path fill="#e8e8e8" d="M33.4 142.5h1.8v1.8h-1.8zM531.7 327.0h1.4v2.2h-1.4zM532.0 193.8h2v1.8h-2zM568.9 103.2h1.4v1.4h-1.4zM462.0 363.8h2v1.8h-2zM496.4 56.7h1.8v1.8h-1.8zM562.7 335.7h1.4v1.8h-1.4zM21.5 144.5h2v2.2h-2zM352.6 350.0h2v1.4h-2zM559.9 194.1h1.4v2.2h-1.4zM10.1 287.3h1.4v1.8h-1.4zM488.1 225.6h1.8v2.2h-1.8zM6.8 245.9h1.4v1.8h-1.4zM30.8 345.0h2v2.2h-2zM53.1 116.0h1.8v1.8h-1.8zM566.2 188.6h2v2.2h-2zM48.3 101.6h1.4v1.8h-1.4zM332.2 352.3h2v1.4h-2zM129.9 357.8h1.8v1.4h-1.8zM213.3 350.9h1.4v1.8h-1.4zM553.3 152.5h1.8v2.2h-1.8zM226.6 353.9h1.4v1.4h-1.4zM55.1 345.0h2v1.8h-2zM99.4 363.7h1.4v1.8h-1.4zM29.1 160.8h2v1.4h-2zM505.2 59.2h2v2.2h-2zM24.0 72.5h2v1.4h-2zM514.4 233.6h1.8v1.8h-1.8zM517.2 146.4h1.4v1.8h-1.4zM510.0 135.5h1.8v2.2h-1.8zM47.3 260.6h1.4v1.4h-1.4zM1.7 93.7h1.4v1.8h-1.4zM509.8 128.5h1.4v1.8h-1.4zM61.8 221.4h1.8v2.2h-1.8zM535.8 275.8h1.8v1.8h-1.8zM537.9 213.0h2v2.2h-2zM2.1 275.7h1.8v1.8h-1.8z"/></svg><!--/STARS--></div>

<!-- DIALOG -->
<div id="dlg" class="abs">
  <div class="lbl" style="left:8px;top:6px">Levels</div>
  <div id="client" class="abs"></div>
  <!-- close button -->
  <div class="abs" id="closebtn" style="left:360px;top:0px;width:46px;height:17px;border-radius:0 0 4px 4px;background:linear-gradient(#ecb4a8 0%,#de8676 45%,#d0402c 52%,#d85a42 80%,#e89474 100%);box-shadow:0 0 0 1px #6b2a22, inset 0 0 0 1px rgba(255,255,255,.35);">
    <svg width="46" height="18" viewBox="0 0 46 18" style="position:absolute;left:0;top:0"><path d="M21.6 5.6 L27.6 10.6 M27.6 5.6 L21.6 10.6" stroke="#7a4040" stroke-width="4.2" stroke-linecap="square"/><path d="M21.6 5.6 L27.6 10.6 M27.6 5.6 L21.6 10.6" stroke="#ffffff" stroke-width="2.7" stroke-linecap="square"/></svg>
  </div>

  <!-- Preset row -->
  <div class="lbl" style="left:17px;top:42px">Preset:</div>
  <div class="sel" style="left:65px;top:38px;width:212px;height:21px;line-height:19px;padding-left:5px">Custom</div>
  <svg class="abs" style="left:264px;top:47px" width="9" height="5"><path d="M0 0H9L4.5 5Z" fill="#111"/></svg>
  <svg class="abs" style="left:288px;top:43px" width="13" height="11" viewBox="0 0 13 11"><path d="M0 1h2M3 1h7M0 4h2M3 4h7M0 7h2M3 7h5" stroke="#222" stroke-width="1.4"/><path d="M8 7.5h5L10.5 10.5Z" fill="#222"/></svg>

  <!-- Buttons -->
  <div class="btn def" style="left:319px;top:39px">OK</div>
  <div class="btn" style="left:319px;top:67px">Cancel</div>
  <div class="btn" style="left:319px;top:102px">Auto</div>
  <div class="btn" style="left:319px;top:137px">Options...</div>

  <!-- eyedroppers -->
  <svg class="abs dropper" style="left:324px;top:174px" width="16" height="16" viewBox="0 0 16 16"><path d="M1.5 14.5 L3 11 L9 5 L11 7 L5 13 Z" fill="#111" stroke="#222" stroke-width="1"/><path d="M8 3.5 L12.5 8" stroke="#222" stroke-width="2"/><path d="M10.5 5.5 L13.5 2.5" stroke="#222" stroke-width="3.4" stroke-linecap="round"/></svg>
  <svg class="abs dropper" style="left:350px;top:174px" width="16" height="16" viewBox="0 0 16 16"><path d="M1.5 14.5 L3 11 L9 5 L11 7 L5 13 Z" fill="#8a8a8a" stroke="#222" stroke-width="1"/><path d="M8 3.5 L12.5 8" stroke="#222" stroke-width="2"/><path d="M10.5 5.5 L13.5 2.5" stroke="#222" stroke-width="3.4" stroke-linecap="round"/></svg>
  <svg class="abs dropper" style="left:376px;top:174px" width="16" height="16" viewBox="0 0 16 16"><path d="M1.5 14.5 L3 11 L9 5 L11 7 L5 13 Z" fill="#fff" stroke="#222" stroke-width="1"/><path d="M8 3.5 L12.5 8" stroke="#222" stroke-width="2"/><path d="M10.5 5.5 L13.5 2.5" stroke="#222" stroke-width="3.4" stroke-linecap="round"/></svg>

  <!-- preview checkbox -->
  <div class="abs" style="left:318px;top:208px;width:13px;height:13px;box-sizing:border-box;border:1px solid #6d87a8;background:linear-gradient(135deg,#d8dde4,#f6f7f9);box-shadow:inset 0 0 0 1px #f4f4f4"></div>
  <svg class="abs" style="left:318px;top:208px" width="13" height="13" viewBox="0 0 13 13"><path d="M3 6.2 L5.4 9.6 L10 2.8" stroke="#2c4f9c" stroke-width="1.9" fill="none"/></svg>
  <div class="lbl" style="left:334px;top:207px">Preview</div>

  <!-- group box -->
  <div class="abs" style="left:18px;top:87px;width:281px;height:273px;box-sizing:border-box;border:1px solid #a8a8a8;box-shadow:inset 1px 1px 0 #fff, 1px 1px 0 #fff;"></div>
  <div class="abs" style="left:33px;top:80px;width:167px;height:16px;background:#f0f0f0"></div>
  <div class="lbl" style="left:44px;top:83px">Channel:</div>
  <div class="sel" style="left:96px;top:79px;width:100px;height:22px;line-height:20px;padding-left:6px">RGB</div>
  <svg class="abs" style="left:183px;top:89px" width="9" height="5"><path d="M0 0H9L4.5 5Z" fill="#111"/></svg>

  <div class="lbl" style="left:27px;top:110px">Input Levels:</div>
  <!-- histogram -->
  <div class="abs" id="histo" style="left:31px;top:130px;width:258px;height:102px;box-sizing:border-box;border:1px solid #a9a9a9;background:#fafafa">
  <!--HISTO--><svg width="256" height="100" viewBox="0 0 256 100" style="position:absolute;left:0;top:0"><path d="M0 99.6L0 96.7H1L1 96.3H2L2 96.5H3L3 95.6H4L4 95.8H5L5 95.3H6L6 94.7H7L7 94.9H8L8 94.2H9L9 94.2H10L10 93.6H11L11 93.4H12L12 93.5H13L13 93.7H14L14 92.8H15L15 92.7H16L16 92.8H17L17 93.8H18L18 91.3H19L19 89.5H20L20 91.3H21L21 87.5H22L22 90.1H23L23 87.7H24L24 86.8H25L25 86.3H26L26 86.7H27L27 88.3H28L28 85.6H29L29 86.8H30L30 86.7H31L31 85.4H32L32 85.8H33L33 83.7H34L34 83.4H35L35 83.6H36L36 80.2H37L37 74.1H38L38 73.2H39L39 73.7H40L40 72.8H41L41 71.8H42L42 73.2H43L43 72.4H44L44 70.3H45L45 71.0H46L46 70.5H47L47 71.4H48L48 70.6H49L49 68.6H50L50 70.8H51L51 67.3H52L52 68.1H53L53 69.0H54L54 66.4H55L55 62.5H56L56 55.6H57L57 57.4H58L58 57.3H59L59 56.1H60L60 56.7H61L61 54.1H62L62 55.0H63L63 54.1H64L64 53.7H65L65 52.9H66L66 54.0H67L67 54.0H68L68 51.9H69L69 52.3H70L70 49.8H71L71 51.8H72L72 51.2H73L73 49.4H74L74 45.6H75L75 43.4H76L76 43.5H77L77 44.3H78L78 41.7H79L79 43.0H80L80 41.7H81L81 41.3H82L82 40.8H83L83 43.1H84L84 40.5H85L85 40.6H86L86 40.9H87L87 42.4H88L88 39.2H89L89 40.3H90L90 40.4H91L91 41.5H92L92 41.4H93L93 41.6H94L94 39.6H95L95 40.2H96L96 40.2H97L97 42.6H98L98 43.2H99L99 40.7H100L100 41.1H101L101 41.7H102L102 42.1H103L103 43.4H104L104 44.2H105L105 43.4H106L106 42.8H107L107 44.7H108L108 44.9H109L109 46.1H110L110 48.3H111L111 48.0H112L112 48.1H113L113 49.2H114L114 50.1H115L115 48.5H116L116 52.2H117L117 52.2H118L118 52.9H119L119 53.0H120L120 51.9H121L121 52.7H122L122 52.6H123L123 55.5H124L124 54.4H125L125 55.4H126L126 57.0H127L127 57.8H128L128 59.4H129L129 59.3H130L130 60.0H131L131 61.5H132L132 62.3H133L133 64.2H134L134 63.7H135L135 67.4H136L136 67.0H137L137 65.8H138L138 66.8H139L139 67.7H140L140 68.3H141L141 68.0H142L142 71.2H143L143 72.3H144L144 71.0H145L145 71.6H146L146 71.0H147L147 72.2H148L148 74.2H149L149 75.0H150L150 78.3H151L151 76.9H152L152 77.6H153L153 82.1H154L154 81.7H155L155 81.1H156L156 83.0H157L157 81.6H158L158 84.0H159L159 86.1H160L160 86.2H161L161 86.0H162L162 84.9H163L163 85.8H164L164 85.6H165L165 88.3H166L166 88.0H167L167 89.4H168L168 88.3H169L169 88.4H170L170 91.1H171L171 92.2H172L172 92.3H173L173 92.5H174L174 93.0H175L175 93.0H176L176 91.5H177L177 93.2H178L178 93.5H179L179 93.5H180L180 93.9H181L181 94.5H182L182 94.8H183L183 95.5H184L184 96.0H185L185 95.8H186L186 96.5H187L187 96.9H188L188 97.1H189L189 96.8H190L190 97.0H191L191 97.2H192L192 97.3H193L193 97.4H194L194 98.0H195L195 98.4H196L196 98.5H197L197 98.2H198L198 98.5H199L199 98.7H200L200 98.8H201L201 98.9H202L202 99.0H203L203 99.0H204L204 99.0H205L205 99.0H206L206 99.0H207L207 99.0H208L208 99.0H209L209 99.0H210L210 99.0H211L211 99.0H212L212 99.0H213L213 99.0H214L214 99.0H215L215 99.0H216L216 99.0H217L217 99.0H218L218 99.0H219L219 99.0H220L220 99.0H221L221 99.0H222L222 99.0H223L223 99.0H224L224 99.0H225L225 99.0H226L226 99.0H227L227 99.0H228L228 99.0H229L229 99.0H230L230 99.0H231L231 99.0H232L232 99.0H233L233 99.0H234L234 99.0H235L235 99.0H236L236 99.0H237L237 99.0H238L238 99.0H239L239 99.0H240L240 99.0H241L241 99.0H242L242 99.0H243L243 99.0H244L244 99.0H245L245 99.0H246L246 99.0H247L247 99.0H248L248 99.0H249L249 99.0H250L250 99.0H251L251 99.0H252L252 99.0H253L253 99.0H254L254 99.0H255L255 99.0H256L256 99.0H257L256 99.6Z" fill="#1e1e1e"/><path d="M0.5 99.6V86.0M18.2 99.6V65.0M36.5 99.6V26.0M55.6 99.6V0.0M73.4 99.6V0.0M91.4 99.6V0.0M109.4 99.6V0.0M128.4 99.6V2.0M146.4 99.6V39.0M164.3 99.6V68.0M182.3 99.6V85.0M200.2 99.6V95.0M251.0 99.6V98.0" stroke="#1e1e1e" stroke-width="1.2" fill="none"/><path d="M0 99.5H256" stroke="#1e1e1e" stroke-width="1"/></svg><!--/HISTO-->
  </div>
  <!-- input sliders -->
  <svg class="abs" style="left:188px;top:232px" width="60" height="11" viewBox="0 0 60 11">
    <path d="M1.5 9.5 V6 L6.5 1.2 L11.5 6 V9.5 Z" fill="#1a1a1a" stroke="#555" stroke-width="1"/>
    <path d="M22.5 9.5 V6 L27.5 1.2 L32.5 6 V9.5 Z" fill="#808080" stroke="#666" stroke-width="1"/>
    <path d="M43.5 9.5 V6 L48.5 1.2 L53.5 6 V9.5 Z" fill="#e8e8e8" stroke="#777" stroke-width="1"/>
  </svg>
  <div class="inp" style="left:28px;top:249px">162</div>
  <div class="inp" style="left:131px;top:249px">1.00</div>
  <div class="inp" style="left:235px;top:249px;border-color:#a4c0e6;border-top-color:#46689c;padding-left:4px"><span style="background:#2f8af0;color:#fff;padding:0 1px">204</span></div>

  <div class="abs" style="left:28px;top:278px;width:264px;height:1px;background:#d0d0d0;box-shadow:0 1px 0 #fff"></div>
  <div class="lbl" style="left:27px;top:284px">Output Levels:</div>
  <div class="abs" style="left:31px;top:304px;width:257px;height:12px;box-sizing:border-box;border:1px solid #8a8a8a;background:linear-gradient(90deg,#000,#fff)"></div>
  <svg class="abs" style="left:27px;top:316px" width="270" height="11" viewBox="0 0 270 11">
    <path d="M1.5 9.5 V6 L6.5 1.2 L11.5 6 V9.5 Z" fill="#1a1a1a" stroke="#555" stroke-width="1"/>
    <path d="M255.5 9.5 V6 L260.5 1.2 L265.5 6 V9.5 Z" fill="#e8e8e8" stroke="#777" stroke-width="1"/>
  </svg>
  <div class="inp" style="left:28px;top:334px">0</div>
  <div class="inp" style="left:235px;top:334px">255</div>
</div>

<!-- window frame tint -->
<div class="abs" style="left:0;top:0;width:617px;height:3px;background:linear-gradient(rgba(120,80,170,.75),rgba(120,80,170,0))"></div>
<div class="abs" style="left:0;top:0;width:1px;height:591px;background:#b8a8d0"></div>
<div class="abs" style="left:1px;top:0;width:1px;height:591px;background:#160c28"></div>
<div class="abs" style="left:2px;top:0;width:3px;height:591px;background:#595062"></div>
<div class="abs" style="left:5px;top:29px;width:1px;height:562px;background:#3a3a3a"></div>
<div class="abs" style="left:615px;top:0;width:2px;height:591px;background:#5c4496"></div>
<div class="abs" style="left:614px;top:0;width:1px;height:591px;background:rgba(60,35,100,.55)"></div>
<div class="abs" style="left:0;top:589px;width:617px;height:2px;background:#7742cc"></div>
<div class="abs" style="left:0;top:584px;width:617px;height:5px;background:linear-gradient(rgba(90,50,160,0),rgba(90,50,160,.45))"></div>

</div>
</body>
</html>
